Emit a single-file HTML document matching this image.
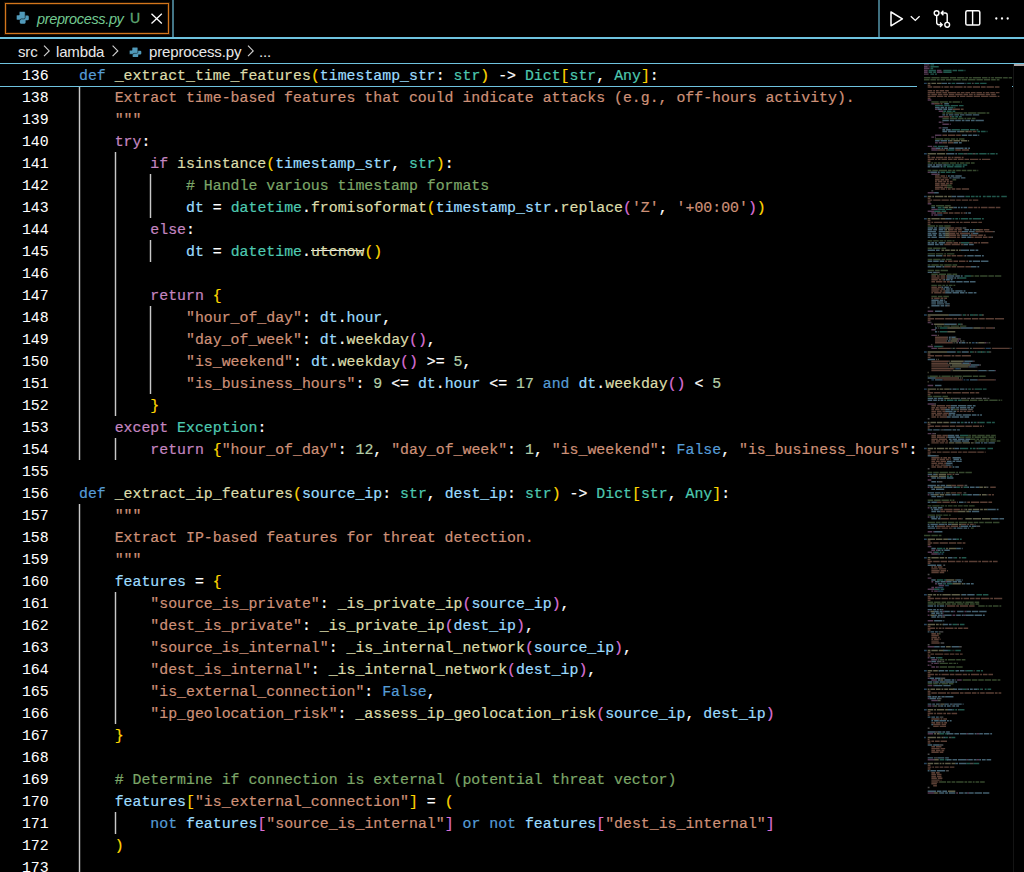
<!DOCTYPE html>
<html><head><meta charset="utf-8"><style>
html,body{margin:0;padding:0;background:#000;width:1024px;height:872px;overflow:hidden;position:relative}
*{box-sizing:border-box}
#code{position:absolute;left:0;top:0;width:918px;height:872px;overflow:hidden}
.ln,.nm{position:absolute;margin-top:1px;height:22px;-webkit-text-stroke:0.2px currentColor;line-height:22px;font-family:"Liberation Mono",monospace;font-size:14.87px;white-space:pre;color:#fff}
.ln{left:79px}
.nm{left:0;width:48.7px;text-align:right}
.gd{position:absolute;width:1px;background:#c8c8c8;box-shadow:-1px 0 0 rgba(200,200,200,.22),1px 0 0 rgba(200,200,200,.22)}
#sticky{position:absolute;left:0;top:64px;width:917px;height:23px;background:#000;border-bottom:1px solid #6fc3df}
i{font-style:normal}
.kw{color:#569cd6}.ct{color:#c586c0}.fn{color:#dcdcaa}.vr{color:#9cdcfe}.ty{color:#4ec9b0}.st{color:#ce9178}.nu{color:#b5cea8}.cm{color:#7ca668}.p{color:#fff}
.b1{color:#ffd700}.b2{color:#da70d6}.b3{color:#179fff}
.dep{color:#dcdcaa;background:linear-gradient(#f0f0f0,#f0f0f0) no-repeat 0 6.2px/100% 1.1px}
.nm{-webkit-text-stroke:0.05px currentColor}

</style></head><body>
<div style="position:absolute;left:0;top:37px;width:1024px;height:2px;background:#6fc3df"></div>
<div style="position:absolute;left:0;top:63px;width:1024px;height:1px;background:#6fc3df"></div>
<div style="position:absolute;left:172px;top:0;width:2px;height:37px;background:#6fc3df;opacity:.6"></div>
<div style="position:absolute;left:878px;top:0;width:2px;height:37px;background:#6fc3df;opacity:.57"></div>
<div style="position:absolute;left:5px;top:3px;width:164px;height:31px;border:1px solid #d2761c;box-shadow:0 0 0 1px rgba(243,133,24,.16),inset 0 0 0 1px rgba(243,133,24,.16)"></div>
<svg style="position:absolute;left:16px;top:11px" width="13" height="13" viewBox="0 0 13 13"><g fill="#519aba"><path d="M5.6 4.6 H11.6 Q12.8 4.6 12.8 5.8 V8.2 Q12.8 9.3 11.6 9.3 H9.6 V11.6 Q9.6 12.7 8.5 12.7 H4.9 Q3.8 12.7 3.8 11.6 V8.4 Q3.8 7.6 4.6 7.6 H5.6 Z"/><path d="M4.3 0.4 H8.1 Q9.2 0.4 9.2 1.5 V6.6 Q9.2 7.9 7.9 7.9 H5.2 Q4.4 7.9 4.4 8.7 V9 H1.5 Q0.4 9 0.4 7.9 V5.1 Q0.4 4 1.5 4 H3.2 V1.5 Q3.2 0.4 4.3 0.4 Z" stroke="#000" stroke-width="0.55"/></g></svg>
<div id="tabt" style="position:absolute;left:37px;top:11px;height:20px;line-height:20px;letter-spacing:-0.35px;font:italic 14.5px 'Liberation Sans',sans-serif;color:#73c991;white-space:pre">preprocess.py</div>
<div id="tabu" style="position:absolute;left:130px;top:10px;height:20px;line-height:20px;font:14px 'Liberation Sans',sans-serif;color:#5fa873;-webkit-text-stroke:0.35px #5fa873">U</div>
<svg style="position:absolute;left:150px;top:12px" width="14" height="14" viewBox="0 0 14 14"><path d="M1.5 1.8 L11.8 11.4 M11.8 1.8 L1.5 11.4" stroke="#fff" stroke-width="1.3" fill="none"/></svg>
<svg style="position:absolute;left:880px;top:0" width="144" height="37" viewBox="880 0 144 37" fill="none" stroke="#fff">
<path d="M891 12 L891 25.8 L902.4 18.9 Z" stroke-width="1.5" stroke-linejoin="round"/>
<path d="M910.8 16.2 L915.3 20.5 L919.6 16.2" stroke-width="1.25"/>
<circle cx="936.6" cy="13.1" r="2.4" stroke-width="1.4"/>
<circle cx="947.2" cy="24.8" r="2.4" stroke-width="1.4"/>
<path d="M936.7 15.6 V22.6 Q936.7 24.7 938.8 24.7 H942.2 M940 22.5 L942.2 24.7 L940 26.9" stroke-width="1.4"/>
<path d="M947.2 22.4 V15 Q947.2 13 945.2 13 H941.2 M943.4 10.8 L941.2 13 L943.4 15.2" stroke-width="1.4"/>
<rect x="965.8" y="10.7" width="14" height="14.4" rx="1.6" stroke-width="1.5"/>
<path d="M972.6 10.7 V25.1" stroke-width="1.4"/>
<g fill="#fff" stroke="none"><circle cx="996.3" cy="18.5" r="1.15"/><circle cx="1002" cy="18.5" r="1.15"/><circle cx="1007.7" cy="18.5" r="1.15"/></g>
</svg>
<div id="bc1" style="position:absolute;letter-spacing:-0.15px;left:18px;top:43px;height:22px;line-height:20px;font:15px 'Liberation Sans',sans-serif;color:#e8e8e8;white-space:pre">src</div>
<div id="bc2" style="position:absolute;letter-spacing:-0.15px;left:56px;top:43px;height:22px;line-height:20px;font:15px 'Liberation Sans',sans-serif;color:#e8e8e8;white-space:pre">lambda</div>
<div id="bc3" style="position:absolute;letter-spacing:-0.15px;left:149px;top:43px;height:22px;line-height:20px;font:15px 'Liberation Sans',sans-serif;color:#e8e8e8;white-space:pre">preprocess.py</div>
<div id="bc4" style="position:absolute;letter-spacing:-0.15px;left:259px;top:43px;height:22px;line-height:20px;font:15px 'Liberation Sans',sans-serif;color:#e8e8e8;white-space:pre">...</div>
<svg style="position:absolute;left:0;top:40px" width="300" height="23" viewBox="0 40 300 23" fill="none" stroke="#d0d0d0" stroke-width="1.15">
<path d="M44 45.6 L49.2 50.9 L44 56.2"/>
<path d="M112.6 45.6 L117.8 50.9 L112.6 56.2"/>
<path d="M248 45.6 L253.2 50.9 L248 56.2"/>
</svg>
<svg style="position:absolute;left:129px;top:46.5px" width="12.5" height="10.5" viewBox="0 0 13 13" preserveAspectRatio="none"><g fill="#519aba"><path d="M5.6 4.6 H11.6 Q12.8 4.6 12.8 5.8 V8.2 Q12.8 9.3 11.6 9.3 H9.6 V11.6 Q9.6 12.7 8.5 12.7 H4.9 Q3.8 12.7 3.8 11.6 V8.4 Q3.8 7.6 4.6 7.6 H5.6 Z"/><path d="M4.3 0.4 H8.1 Q9.2 0.4 9.2 1.5 V6.6 Q9.2 7.9 7.9 7.9 H5.2 Q4.4 7.9 4.4 8.7 V9 H1.5 Q0.4 9 0.4 7.9 V5.1 Q0.4 4 1.5 4 H3.2 V1.5 Q3.2 0.4 4.3 0.4 Z" stroke="#000" stroke-width="0.55"/></g></svg>

<div id="code">
<div class="gd" style="left:79px;top:86px;height:374px"></div><div class="gd" style="left:79px;top:504px;height:374px"></div><div class="gd" style="left:115px;top:152px;height:264px"></div><div class="gd" style="left:115px;top:438px;height:22px"></div><div class="gd" style="left:115px;top:592px;height:132px"></div><div class="gd" style="left:115px;top:812px;height:22px"></div><div class="gd" style="left:150px;top:174px;height:44px"></div><div class="gd" style="left:150px;top:240px;height:22px"></div><div class="gd" style="left:150px;top:306px;height:88px"></div>
<div class="nm" style="top:86px">138</div><div class="nm" style="top:108px">139</div><div class="nm" style="top:130px">140</div><div class="nm" style="top:152px">141</div><div class="nm" style="top:174px">142</div><div class="nm" style="top:196px">143</div><div class="nm" style="top:218px">144</div><div class="nm" style="top:240px">145</div><div class="nm" style="top:262px">146</div><div class="nm" style="top:284px">147</div><div class="nm" style="top:306px">148</div><div class="nm" style="top:328px">149</div><div class="nm" style="top:350px">150</div><div class="nm" style="top:372px">151</div><div class="nm" style="top:394px">152</div><div class="nm" style="top:416px">153</div><div class="nm" style="top:438px">154</div><div class="nm" style="top:460px">155</div><div class="nm" style="top:482px">156</div><div class="nm" style="top:504px">157</div><div class="nm" style="top:526px">158</div><div class="nm" style="top:548px">159</div><div class="nm" style="top:570px">160</div><div class="nm" style="top:592px">161</div><div class="nm" style="top:614px">162</div><div class="nm" style="top:636px">163</div><div class="nm" style="top:658px">164</div><div class="nm" style="top:680px">165</div><div class="nm" style="top:702px">166</div><div class="nm" style="top:724px">167</div><div class="nm" style="top:746px">168</div><div class="nm" style="top:768px">169</div><div class="nm" style="top:790px">170</div><div class="nm" style="top:812px">171</div><div class="nm" style="top:834px">172</div><div class="nm" style="top:856px">173</div>
<div class="ln" style="top:86px"><i class="st">    Extract time-based features that could indicate attacks (e.g., off-hours activity).</i></div><div class="ln" style="top:108px"><i class="st">    """</i></div><div class="ln" style="top:130px">    <i class="ct">try</i><i class="p">:</i></div><div class="ln" style="top:152px">        <i class="ct">if</i> <i class="fn">isinstance</i><i class="b1">(</i><i class="vr">timestamp_str</i><i class="p">, </i><i class="ty">str</i><i class="b1">)</i><i class="p">:</i></div><div class="ln" style="top:174px">            <i class="cm"># Handle various timestamp formats</i></div><div class="ln" style="top:196px">            <i class="vr">dt</i><i class="p"> = </i><i class="ty">datetime</i><i class="p">.</i><i class="fn">fromisoformat</i><i class="b1">(</i><i class="vr">timestamp_str</i><i class="p">.</i><i class="fn">replace</i><i class="b2">(</i><i class="st">'Z'</i><i class="p">, </i><i class="st">'+00:00'</i><i class="b2">)</i><i class="b1">)</i></div><div class="ln" style="top:218px">        <i class="ct">else</i><i class="p">:</i></div><div class="ln" style="top:240px">            <i class="vr">dt</i><i class="p"> = </i><i class="ty">datetime</i><i class="p">.</i><i class="dep">utcnow</i><i class="b1">()</i></div><div class="ln" style="top:262px"></div><div class="ln" style="top:284px">        <i class="ct">return</i> <i class="b1">{</i></div><div class="ln" style="top:306px">            <i class="st">"hour_of_day"</i><i class="p">: </i><i class="vr">dt</i><i class="p">.</i><i class="vr">hour</i><i class="p">,</i></div><div class="ln" style="top:328px">            <i class="st">"day_of_week"</i><i class="p">: </i><i class="vr">dt</i><i class="p">.</i><i class="fn">weekday</i><i class="b2">()</i><i class="p">,</i></div><div class="ln" style="top:350px">            <i class="st">"is_weekend"</i><i class="p">: </i><i class="vr">dt</i><i class="p">.</i><i class="fn">weekday</i><i class="b2">()</i><i class="p"> &gt;= </i><i class="nu">5</i><i class="p">,</i></div><div class="ln" style="top:372px">            <i class="st">"is_business_hours"</i><i class="p">: </i><i class="nu">9</i><i class="p"> &lt;= </i><i class="vr">dt</i><i class="p">.</i><i class="vr">hour</i><i class="p"> &lt;= </i><i class="nu">17</i> <i class="kw">and</i> <i class="vr">dt</i><i class="p">.</i><i class="fn">weekday</i><i class="b2">()</i><i class="p"> &lt; </i><i class="nu">5</i></div><div class="ln" style="top:394px">        <i class="b1">}</i></div><div class="ln" style="top:416px">    <i class="ct">except</i> <i class="ty">Exception</i><i class="p">:</i></div><div class="ln" style="top:438px">        <i class="ct">return</i> <i class="b1">{</i><i class="st">"hour_of_day"</i><i class="p">: </i><i class="nu">12</i><i class="p">, </i><i class="st">"day_of_week"</i><i class="p">: </i><i class="nu">1</i><i class="p">, </i><i class="st">"is_weekend"</i><i class="p">: </i><i class="kw">False</i><i class="p">, </i><i class="st">"is_business_hours"</i><i class="p">: </i><i class="kw">False</i><i class="b1">}</i></div><div class="ln" style="top:460px"></div><div class="ln" style="top:482px"><i class="kw">def</i> <i class="fn">_extract_ip_features</i><i class="b1">(</i><i class="vr">source_ip</i><i class="p">: </i><i class="ty">str</i><i class="p">, </i><i class="vr">dest_ip</i><i class="p">: </i><i class="ty">str</i><i class="b1">)</i><i class="p"> -&gt; </i><i class="ty">Dict</i><i class="b1">[</i><i class="ty">str</i><i class="p">, </i><i class="ty">Any</i><i class="b1">]</i><i class="p">:</i></div><div class="ln" style="top:504px"><i class="st">    """</i></div><div class="ln" style="top:526px"><i class="st">    Extract IP-based features for threat detection.</i></div><div class="ln" style="top:548px"><i class="st">    """</i></div><div class="ln" style="top:570px">    <i class="vr">features</i><i class="p"> = </i><i class="b1">{</i></div><div class="ln" style="top:592px">        <i class="st">"source_is_private"</i><i class="p">: </i><i class="fn">_is_private_ip</i><i class="b2">(</i><i class="vr">source_ip</i><i class="b2">)</i><i class="p">,</i></div><div class="ln" style="top:614px">        <i class="st">"dest_is_private"</i><i class="p">: </i><i class="fn">_is_private_ip</i><i class="b2">(</i><i class="vr">dest_ip</i><i class="b2">)</i><i class="p">,</i></div><div class="ln" style="top:636px">        <i class="st">"source_is_internal"</i><i class="p">: </i><i class="fn">_is_internal_network</i><i class="b2">(</i><i class="vr">source_ip</i><i class="b2">)</i><i class="p">,</i></div><div class="ln" style="top:658px">        <i class="st">"dest_is_internal"</i><i class="p">: </i><i class="fn">_is_internal_network</i><i class="b2">(</i><i class="vr">dest_ip</i><i class="b2">)</i><i class="p">,</i></div><div class="ln" style="top:680px">        <i class="st">"is_external_connection"</i><i class="p">: </i><i class="kw">False</i><i class="p">,</i></div><div class="ln" style="top:702px">        <i class="st">"ip_geolocation_risk"</i><i class="p">: </i><i class="fn">_assess_ip_geolocation_risk</i><i class="b2">(</i><i class="vr">source_ip</i><i class="p">, </i><i class="vr">dest_ip</i><i class="b2">)</i></div><div class="ln" style="top:724px">    <i class="b1">}</i></div><div class="ln" style="top:746px"></div><div class="ln" style="top:768px">    <i class="cm"># Determine if connection is external (potential threat vector)</i></div><div class="ln" style="top:790px">    <i class="vr">features</i><i class="b1">[</i><i class="st">"is_external_connection"</i><i class="b1">]</i><i class="p"> = </i><i class="b1">(</i></div><div class="ln" style="top:812px">        <i class="kw">not</i> <i class="vr">features</i><i class="b2">[</i><i class="st">"source_is_internal"</i><i class="b2">]</i> <i class="kw">or</i> <i class="kw">not</i> <i class="vr">features</i><i class="b2">[</i><i class="st">"dest_is_internal"</i><i class="b2">]</i></div><div class="ln" style="top:834px">    <i class="b1">)</i></div><div class="ln" style="top:856px"></div>
<div id="sticky"><div class="nm" style="top:0px">136</div><div class="ln" style="top:0px"><i class="kw">def</i> <i class="fn">_extract_time_features</i><i class="b1">(</i><i class="vr">timestamp_str</i><i class="p">: </i><i class="ty">str</i><i class="b1">)</i><i class="p"> -&gt; </i><i class="ty">Dict</i><i class="b1">[</i><i class="ty">str</i><i class="p">, </i><i class="ty">Any</i><i class="b1">]</i><i class="p">:</i></div></div>
</div>
<svg style="position:absolute;left:0;top:0" width="1024" height="872" viewBox="0 0 1024 872"><defs><filter id="mmb" x="0" y="0" width="1" height="1"><feGaussianBlur stdDeviation="0.3"/></filter></defs><g opacity="0.43" filter="url(#mmb)"><path fill="#c586c0" d="M924.00 64.13h5.52v1.45h-5.52zM924.00 65.98h3.68v1.45h-3.68zM928.60 65.98h0.92v1.45h-0.92zM924.00 67.84h5.52v1.45h-5.52zM924.00 69.69h3.68v1.45h-3.68zM936.88 69.69h4.60v1.45h-4.60zM924.00 71.54h3.68v1.45h-3.68zM936.88 71.54h5.52v1.45h-5.52zM924.00 73.39h4.60v1.45h-4.60zM927.68 99.34h3.68v1.45h-3.68zM931.36 103.04h2.76v1.45h-2.76zM935.04 108.60h2.76v1.45h-2.76zM938.72 110.45h4.60v1.45h-4.60zM938.72 116.01h4.60v1.45h-4.60zM938.72 121.57h2.76v1.45h-2.76zM942.40 121.57h0.92v1.45h-0.92zM942.40 123.43h6.44v1.45h-6.44zM949.76 123.43h0.92v1.45h-0.92zM938.72 127.13h2.76v1.45h-2.76zM935.04 134.54h6.44v1.45h-6.44zM931.36 136.40h2.76v1.45h-2.76zM935.04 136.40h0.92v1.45h-0.92zM935.04 141.96h2.76v1.45h-2.76zM938.72 141.96h3.68v1.45h-3.68zM927.68 145.66h4.60v1.45h-4.60zM933.20 145.66h0.92v1.45h-0.92zM931.36 147.51h4.60v1.45h-4.60zM931.36 149.37h6.44v1.45h-6.44zM927.68 171.60h2.76v1.45h-2.76zM931.36 173.46h6.44v1.45h-6.44zM927.68 191.99h6.44v1.45h-6.44zM927.68 203.10h3.68v1.45h-3.68zM931.36 208.66h6.44v1.45h-6.44zM927.68 210.52h6.44v1.45h-6.44zM931.36 212.37h4.60v1.45h-4.60zM936.88 212.37h0.92v1.45h-0.92zM931.36 214.22h1.84v1.45h-1.84zM934.12 214.22h3.68v1.45h-3.68zM927.68 310.58h5.52v1.45h-5.52zM927.68 321.70h2.76v1.45h-2.76zM931.36 323.55h1.84v1.45h-1.84zM980.12 327.26h0.92v1.45h-0.92zM993.00 327.26h0.92v1.45h-0.92zM931.36 329.11h3.68v1.45h-3.68zM931.36 334.67h5.52v1.45h-5.52zM958.04 338.37h1.84v1.45h-1.84zM957.12 340.23h1.84v1.45h-1.84zM984.72 342.08h1.84v1.45h-1.84zM927.68 345.79h5.52v1.45h-5.52zM931.36 347.64h5.52v1.45h-5.52zM963.56 360.61h0.92v1.45h-0.92zM972.76 360.61h0.92v1.45h-0.92zM961.72 362.46h0.92v1.45h-0.92zM969.08 362.46h0.92v1.45h-0.92zM970.00 364.32h0.92v1.45h-0.92zM979.20 364.32h0.92v1.45h-0.92zM968.16 366.17h0.92v1.45h-0.92zM975.52 366.17h0.92v1.45h-0.92zM977.36 369.88h0.92v1.45h-0.92zM994.84 369.88h0.92v1.45h-0.92zM942.40 379.14h0.92v1.45h-0.92zM961.72 379.14h0.92v1.45h-0.92zM977.36 379.14h0.92v1.45h-0.92zM994.84 379.14h0.92v1.45h-0.92zM927.68 384.70h5.52v1.45h-5.52zM927.68 403.23h6.44v1.45h-6.44zM927.68 432.88h3.68v1.45h-3.68zM932.28 432.88h1.84v1.45h-1.84zM927.68 475.50h1.84v1.45h-1.84zM927.68 479.20h3.68v1.45h-3.68zM927.68 486.61h1.84v1.45h-1.84zM927.68 494.03h1.84v1.45h-1.84zM927.68 507.00h1.84v1.45h-1.84zM927.68 516.26h1.84v1.45h-1.84zM927.68 531.09h4.60v1.45h-4.60zM933.20 531.09h0.92v1.45h-0.92zM927.68 545.91h3.68v1.45h-3.68zM931.36 549.62h3.68v1.45h-3.68zM935.96 549.62h1.84v1.45h-1.84zM927.68 551.47h4.60v1.45h-4.60zM933.20 551.47h0.92v1.45h-0.92zM931.36 553.32h6.44v1.45h-6.44zM927.68 577.41h3.68v1.45h-3.68zM931.36 581.12h1.84v1.45h-1.84zM945.16 581.12h1.84v1.45h-1.84zM935.04 582.97h1.84v1.45h-1.84zM938.72 584.82h5.52v1.45h-5.52zM931.36 586.68h2.76v1.45h-2.76zM935.04 586.68h2.76v1.45h-2.76zM927.68 588.53h6.44v1.45h-6.44zM931.36 590.38h1.84v1.45h-1.84zM934.12 590.38h3.68v1.45h-3.68zM927.68 610.76h1.84v1.45h-1.84zM942.40 610.76h1.84v1.45h-1.84zM953.44 610.76h1.84v1.45h-1.84zM964.48 610.76h1.84v1.45h-1.84zM927.68 614.47h1.84v1.45h-1.84zM942.40 614.47h1.84v1.45h-1.84zM952.52 614.47h2.76v1.45h-2.76zM963.56 614.47h1.84v1.45h-1.84zM927.68 620.03h5.52v1.45h-5.52zM927.68 645.97h6.44v1.45h-6.44zM927.68 657.09h1.84v1.45h-1.84zM931.36 658.94h5.52v1.45h-5.52zM927.68 660.80h3.68v1.45h-3.68zM931.36 662.65h1.84v1.45h-1.84zM934.12 662.65h3.68v1.45h-3.68zM927.68 664.50h1.84v1.45h-1.84zM930.44 664.50h0.92v1.45h-0.92zM931.36 666.36h3.68v1.45h-3.68zM935.96 666.36h1.84v1.45h-1.84zM927.68 677.47h1.84v1.45h-1.84zM931.36 679.33h5.52v1.45h-5.52zM957.12 679.33h4.60v1.45h-4.60zM927.68 684.88h4.60v1.45h-4.60zM933.20 684.88h0.92v1.45h-0.92zM927.68 697.86h1.84v1.45h-1.84zM931.36 699.71h6.44v1.45h-6.44zM927.68 705.27h3.68v1.45h-3.68zM932.28 705.27h1.84v1.45h-1.84zM927.68 733.06h5.52v1.45h-5.52zM966.32 733.06h1.84v1.45h-1.84zM976.44 733.06h2.76v1.45h-2.76zM927.68 759.00h6.44v1.45h-6.44zM966.32 759.00h1.84v1.45h-1.84zM976.44 759.00h2.76v1.45h-2.76zM927.68 792.36h6.44v1.45h-6.44zM956.20 792.36h1.84v1.45h-1.84zM967.24 792.36h1.84v1.45h-1.84z"/><path fill="#4ec9b0" d="M930.44 64.13h3.68v1.45h-3.68zM930.44 65.98h8.28v1.45h-8.28zM930.44 67.84h2.76v1.45h-2.76zM928.60 69.69h7.36v1.45h-7.36zM943.32 69.69h8.28v1.45h-8.28zM952.52 69.69h4.60v1.45h-4.60zM958.04 69.69h5.52v1.45h-5.52zM964.48 69.69h0.92v1.45h-0.92zM928.60 71.54h3.68v1.45h-3.68zM933.20 71.54h2.76v1.45h-2.76zM943.32 71.54h8.28v1.45h-8.28zM930.44 73.39h3.68v1.45h-3.68zM935.04 73.39h1.84v1.45h-1.84zM951.60 82.66h3.68v1.45h-3.68zM967.24 82.66h3.68v1.45h-3.68zM974.60 82.66h4.60v1.45h-4.60zM980.12 82.66h6.44v1.45h-6.44zM935.04 104.90h8.28v1.45h-8.28zM944.24 104.90h5.52v1.45h-5.52zM950.68 104.90h7.36v1.45h-7.36zM958.96 104.90h4.60v1.45h-4.60zM948.84 106.75h4.60v1.45h-4.60zM954.36 106.75h0.92v1.45h-0.92zM943.32 110.45h2.76v1.45h-2.76zM947.00 110.45h4.60v1.45h-4.60zM952.52 110.45h2.76v1.45h-2.76zM951.60 116.01h2.76v1.45h-2.76zM955.28 116.01h2.76v1.45h-2.76zM958.96 116.01h2.76v1.45h-2.76zM951.60 128.99h8.28v1.45h-8.28zM960.80 128.99h8.28v1.45h-8.28zM970.00 128.99h5.52v1.45h-5.52zM976.44 128.99h1.84v1.45h-1.84zM977.36 130.84h2.76v1.45h-2.76zM981.04 130.84h4.60v1.45h-4.60zM986.56 130.84h0.92v1.45h-0.92zM934.12 145.66h2.76v1.45h-2.76zM937.80 145.66h6.44v1.45h-6.44zM947.92 149.37h6.44v1.45h-6.44zM958.04 153.07h5.52v1.45h-5.52zM967.24 153.07h5.52v1.45h-5.52zM975.52 153.07h2.76v1.45h-2.76zM979.20 153.07h7.36v1.45h-7.36zM987.48 153.07h1.84v1.45h-1.84zM990.24 153.07h4.60v1.45h-4.60zM995.76 153.07h1.84v1.45h-1.84zM946.08 164.19h4.60v1.45h-4.60zM951.60 164.19h2.76v1.45h-2.76zM955.28 164.19h6.44v1.45h-6.44zM962.64 164.19h4.60v1.45h-4.60zM943.32 166.04h2.76v1.45h-2.76zM947.00 166.04h6.44v1.45h-6.44zM954.36 166.04h7.36v1.45h-7.36zM962.64 166.04h1.84v1.45h-1.84zM940.56 171.60h4.60v1.45h-4.60zM946.08 171.60h4.60v1.45h-4.60zM951.60 171.60h3.68v1.45h-3.68zM965.40 195.69h4.60v1.45h-4.60zM970.92 195.69h3.68v1.45h-3.68zM975.52 195.69h2.76v1.45h-2.76zM979.20 195.69h1.84v1.45h-1.84zM982.88 195.69h2.76v1.45h-2.76zM986.56 195.69h4.60v1.45h-4.60zM992.08 195.69h3.68v1.45h-3.68zM996.68 195.69h2.76v1.45h-2.76zM1001.28 195.69h5.52v1.45h-5.52zM937.80 206.81h3.68v1.45h-3.68zM942.40 206.81h1.84v1.45h-1.84zM937.80 208.66h7.36v1.45h-7.36zM946.08 208.66h5.52v1.45h-5.52zM934.12 210.52h6.44v1.45h-6.44zM941.48 210.52h4.60v1.45h-4.60zM952.52 217.93h1.84v1.45h-1.84zM955.28 217.93h2.76v1.45h-2.76zM958.96 217.93h0.92v1.45h-0.92zM960.80 217.93h7.36v1.45h-7.36zM969.08 217.93h2.76v1.45h-2.76zM972.76 217.93h8.28v1.45h-8.28zM981.96 217.93h1.84v1.45h-1.84zM960.80 242.02h8.28v1.45h-8.28zM964.48 275.37h6.44v1.45h-6.44zM958.96 277.23h7.36v1.45h-7.36zM962.64 314.28h2.76v1.45h-2.76zM970.00 314.28h3.68v1.45h-3.68zM974.60 314.28h2.76v1.45h-2.76zM979.20 314.28h2.76v1.45h-2.76zM958.04 323.55h2.76v1.45h-2.76zM939.64 327.26h7.36v1.45h-7.36zM939.64 330.96h7.36v1.45h-7.36zM934.12 345.79h8.28v1.45h-8.28zM957.12 351.34h2.76v1.45h-2.76zM970.00 351.34h2.76v1.45h-2.76zM977.36 351.34h3.68v1.45h-3.68zM981.96 351.34h2.76v1.45h-2.76zM986.56 351.34h2.76v1.45h-2.76zM956.20 388.40h2.76v1.45h-2.76zM968.16 388.40h2.76v1.45h-2.76zM974.60 388.40h7.36v1.45h-7.36zM982.88 388.40h3.68v1.45h-3.68zM944.24 399.52h1.84v1.45h-1.84zM947.00 399.52h6.44v1.45h-6.44zM954.36 399.52h2.76v1.45h-2.76zM958.04 399.52h3.68v1.45h-3.68zM960.80 421.76h2.76v1.45h-2.76zM973.68 421.76h2.76v1.45h-2.76zM979.20 421.76h5.52v1.45h-5.52zM986.56 421.76h4.60v1.45h-4.60zM992.08 421.76h2.76v1.45h-2.76zM959.88 434.73h8.28v1.45h-8.28zM960.80 447.70h7.36v1.45h-7.36zM970.00 447.70h1.84v1.45h-1.84zM972.76 447.70h2.76v1.45h-2.76zM978.28 447.70h7.36v1.45h-7.36zM987.48 447.70h5.52v1.45h-5.52zM947.00 475.50h1.84v1.45h-1.84zM949.76 475.50h2.76v1.45h-2.76zM956.20 486.61h3.68v1.45h-3.68zM963.56 486.61h3.68v1.45h-3.68zM956.20 494.03h3.68v1.45h-3.68zM962.64 494.03h4.60v1.45h-4.60zM956.20 538.50h2.76v1.45h-2.76zM959.88 538.50h1.84v1.45h-1.84zM936.88 547.76h5.52v1.45h-5.52zM943.32 547.76h1.84v1.45h-1.84zM934.12 551.47h4.60v1.45h-4.60zM939.64 551.47h1.84v1.45h-1.84zM942.40 551.47h1.84v1.45h-1.84zM954.36 557.03h2.76v1.45h-2.76zM961.72 557.03h4.60v1.45h-4.60zM936.88 579.26h6.44v1.45h-6.44zM944.24 579.26h1.84v1.45h-1.84zM944.24 582.97h1.84v1.45h-1.84zM947.00 582.97h5.52v1.45h-5.52zM934.12 588.53h5.52v1.45h-5.52zM940.56 588.53h3.68v1.45h-3.68zM976.44 594.09h5.52v1.45h-5.52zM982.88 594.09h5.52v1.45h-5.52zM952.52 623.74h4.60v1.45h-4.60zM959.88 623.74h4.60v1.45h-4.60zM947.92 649.68h2.76v1.45h-2.76zM951.60 649.68h0.92v1.45h-0.92zM955.28 649.68h5.52v1.45h-5.52zM937.80 657.09h4.60v1.45h-4.60zM948.84 670.06h5.52v1.45h-5.52zM955.28 670.06h1.84v1.45h-1.84zM966.32 670.06h6.44v1.45h-6.44zM976.44 670.06h3.68v1.45h-3.68zM981.04 670.06h1.84v1.45h-1.84zM962.64 688.59h3.68v1.45h-3.68zM977.36 688.59h1.84v1.45h-1.84zM980.12 688.59h1.84v1.45h-1.84zM984.72 688.59h1.84v1.45h-1.84zM987.48 688.59h3.68v1.45h-3.68zM952.52 708.97h1.84v1.45h-1.84zM955.28 708.97h1.84v1.45h-1.84zM958.96 708.97h5.52v1.45h-5.52zM939.64 733.06h4.60v1.45h-4.60zM945.16 733.06h2.76v1.45h-2.76zM945.16 736.77h2.76v1.45h-2.76zM951.60 736.77h3.68v1.45h-3.68zM939.64 759.00h4.60v1.45h-4.60zM945.16 759.00h2.76v1.45h-2.76zM966.32 762.71h3.68v1.45h-3.68zM973.68 762.71h5.52v1.45h-5.52z"/><path fill="#7ca668" d="M924.00 77.10h6.44v1.45h-6.44zM931.36 77.10h8.28v1.45h-8.28zM940.56 77.10h8.28v1.45h-8.28zM949.76 77.10h6.44v1.45h-6.44zM957.12 77.10h7.36v1.45h-7.36zM965.40 77.10h2.76v1.45h-2.76zM969.08 77.10h2.76v1.45h-2.76zM972.76 77.10h8.28v1.45h-8.28zM981.96 77.10h5.52v1.45h-5.52zM988.40 77.10h1.84v1.45h-1.84zM991.16 77.10h2.76v1.45h-2.76zM994.84 77.10h7.36v1.45h-7.36zM1003.12 77.10h4.60v1.45h-4.60zM1008.64 77.10h3.36v1.45h-3.36zM924.00 78.95h5.52v1.45h-5.52zM930.44 78.95h5.52v1.45h-5.52zM936.88 78.95h2.76v1.45h-2.76zM940.56 78.95h4.60v1.45h-4.60zM946.08 78.95h5.52v1.45h-5.52zM952.52 78.95h8.28v1.45h-8.28zM961.72 78.95h5.52v1.45h-5.52zM968.16 78.95h7.36v1.45h-7.36zM976.44 78.95h6.44v1.45h-6.44zM983.80 78.95h6.44v1.45h-6.44zM991.16 78.95h4.60v1.45h-4.60zM996.68 78.95h2.76v1.45h-2.76zM931.36 101.19h7.36v1.45h-7.36zM939.64 101.19h8.28v1.45h-8.28zM948.84 101.19h2.76v1.45h-2.76zM952.52 101.19h7.36v1.45h-7.36zM960.80 101.19h0.92v1.45h-0.92zM942.40 112.31h2.76v1.45h-2.76zM946.08 112.31h7.36v1.45h-7.36zM954.36 112.31h8.28v1.45h-8.28zM963.56 112.31h3.68v1.45h-3.68zM968.16 112.31h8.28v1.45h-8.28zM977.36 112.31h8.28v1.45h-8.28zM986.56 112.31h2.76v1.45h-2.76zM942.40 117.87h6.44v1.45h-6.44zM949.76 117.87h7.36v1.45h-7.36zM958.04 117.87h5.52v1.45h-5.52zM964.48 117.87h1.84v1.45h-1.84zM967.24 117.87h3.68v1.45h-3.68zM971.84 117.87h3.68v1.45h-3.68zM935.04 138.25h8.28v1.45h-8.28zM944.24 138.25h5.52v1.45h-5.52zM950.68 138.25h4.60v1.45h-4.60zM956.20 138.25h1.84v1.45h-1.84zM958.96 138.25h5.52v1.45h-5.52zM927.68 162.34h2.76v1.45h-2.76zM931.36 162.34h1.84v1.45h-1.84zM934.12 162.34h2.76v1.45h-2.76zM937.80 162.34h2.76v1.45h-2.76zM941.48 162.34h7.36v1.45h-7.36zM949.76 162.34h6.44v1.45h-6.44zM957.12 162.34h1.84v1.45h-1.84zM959.88 162.34h4.60v1.45h-4.60zM965.40 162.34h4.60v1.45h-4.60zM970.92 162.34h3.68v1.45h-3.68zM927.68 169.75h3.68v1.45h-3.68zM932.28 169.75h5.52v1.45h-5.52zM938.72 169.75h8.28v1.45h-8.28zM947.92 169.75h3.68v1.45h-3.68zM952.52 169.75h2.76v1.45h-2.76zM956.20 169.75h4.60v1.45h-4.60zM961.72 169.75h4.60v1.45h-4.60zM967.24 169.75h4.60v1.45h-4.60zM972.76 169.75h3.68v1.45h-3.68zM977.36 169.75h0.92v1.45h-0.92zM952.52 179.02h3.68v1.45h-3.68zM947.00 184.57h4.60v1.45h-4.60zM947.00 186.43h5.52v1.45h-5.52zM931.36 204.96h3.68v1.45h-3.68zM935.96 204.96h8.28v1.45h-8.28zM945.16 204.96h5.52v1.45h-5.52zM927.68 225.34h7.36v1.45h-7.36zM935.96 225.34h1.84v1.45h-1.84zM938.72 225.34h4.60v1.45h-4.60zM944.24 225.34h6.44v1.45h-6.44zM927.68 240.16h4.60v1.45h-4.60zM933.20 240.16h5.52v1.45h-5.52zM939.64 240.16h3.68v1.45h-3.68zM944.24 240.16h1.84v1.45h-1.84zM947.00 240.16h4.60v1.45h-4.60zM952.52 240.16h1.84v1.45h-1.84zM927.68 247.58h4.60v1.45h-4.60zM933.20 247.58h7.36v1.45h-7.36zM941.48 247.58h4.60v1.45h-4.60zM927.68 253.14h7.36v1.45h-7.36zM935.96 253.14h7.36v1.45h-7.36zM944.24 253.14h1.84v1.45h-1.84zM947.00 253.14h7.36v1.45h-7.36zM927.68 258.69h4.60v1.45h-4.60zM933.20 258.69h7.36v1.45h-7.36zM941.48 258.69h3.68v1.45h-3.68zM946.08 258.69h5.52v1.45h-5.52zM927.68 264.25h2.76v1.45h-2.76zM931.36 264.25h7.36v1.45h-7.36zM939.64 264.25h3.68v1.45h-3.68zM944.24 264.25h7.36v1.45h-7.36zM952.52 264.25h4.60v1.45h-4.60zM927.68 269.81h6.44v1.45h-6.44zM935.04 269.81h4.60v1.45h-4.60zM940.56 269.81h7.36v1.45h-7.36zM931.36 273.52h6.44v1.45h-6.44zM938.72 273.52h7.36v1.45h-7.36zM947.00 273.52h4.60v1.45h-4.60zM952.52 273.52h4.60v1.45h-4.60zM970.92 275.37h2.76v1.45h-2.76zM974.60 275.37h4.60v1.45h-4.60zM980.12 275.37h7.36v1.45h-7.36zM988.40 275.37h5.52v1.45h-5.52zM994.84 275.37h6.44v1.45h-6.44zM931.36 284.64h5.52v1.45h-5.52zM937.80 284.64h3.68v1.45h-3.68zM942.40 284.64h2.76v1.45h-2.76zM946.08 284.64h1.84v1.45h-1.84zM948.84 284.64h3.68v1.45h-3.68zM953.44 284.64h1.84v1.45h-1.84zM931.36 295.75h5.52v1.45h-5.52zM937.80 295.75h4.60v1.45h-4.60zM943.32 295.75h5.52v1.45h-5.52zM935.04 325.40h0.92v1.45h-0.92zM936.88 325.40h5.52v1.45h-5.52zM943.32 325.40h6.44v1.45h-6.44zM950.68 325.40h8.28v1.45h-8.28zM959.88 325.40h6.44v1.45h-6.44zM927.68 375.43h0.92v1.45h-0.92zM929.52 375.43h8.28v1.45h-8.28zM938.72 375.43h1.84v1.45h-1.84zM941.48 375.43h9.20v1.45h-9.20zM951.60 375.43h1.84v1.45h-1.84zM954.36 375.43h7.36v1.45h-7.36zM962.64 375.43h9.20v1.45h-9.20zM972.76 375.43h5.52v1.45h-5.52zM979.20 375.43h6.44v1.45h-6.44zM927.68 395.82h4.60v1.45h-4.60zM933.20 395.82h8.28v1.45h-8.28zM942.40 395.82h5.52v1.45h-5.52zM961.72 399.52h7.36v1.45h-7.36zM970.00 399.52h7.36v1.45h-7.36zM978.28 399.52h4.60v1.45h-4.60zM983.80 399.52h4.60v1.45h-4.60zM989.32 399.52h8.28v1.45h-8.28zM998.52 399.52h1.84v1.45h-1.84zM1001.28 399.52h0.92v1.45h-0.92zM953.44 408.79h3.68v1.45h-3.68zM968.16 434.73h2.76v1.45h-2.76zM971.84 434.73h4.60v1.45h-4.60zM977.36 434.73h7.36v1.45h-7.36zM985.64 434.73h4.60v1.45h-4.60zM991.16 434.73h4.60v1.45h-4.60zM959.88 436.58h4.60v1.45h-4.60zM965.40 436.58h5.52v1.45h-5.52zM971.84 436.58h1.84v1.45h-1.84zM974.60 436.58h6.44v1.45h-6.44zM981.96 436.58h5.52v1.45h-5.52zM988.40 436.58h5.52v1.45h-5.52zM994.84 436.58h0.92v1.45h-0.92zM970.00 438.44h5.52v1.45h-5.52zM976.44 438.44h2.76v1.45h-2.76zM980.12 438.44h4.60v1.45h-4.60zM985.64 438.44h3.68v1.45h-3.68zM990.24 438.44h5.52v1.45h-5.52zM974.60 440.29h2.76v1.45h-2.76zM978.28 440.29h6.44v1.45h-6.44zM985.64 440.29h3.68v1.45h-3.68zM990.24 440.29h5.52v1.45h-5.52zM996.68 440.29h3.68v1.45h-3.68zM927.68 471.79h4.60v1.45h-4.60zM933.20 471.79h5.52v1.45h-5.52zM939.64 471.79h8.28v1.45h-8.28zM948.84 471.79h6.44v1.45h-6.44zM956.20 471.79h1.84v1.45h-1.84zM958.96 471.79h5.52v1.45h-5.52zM965.40 471.79h6.44v1.45h-6.44zM927.68 499.58h5.52v1.45h-5.52zM934.12 499.58h6.44v1.45h-6.44zM941.48 499.58h7.36v1.45h-7.36zM949.76 499.58h1.84v1.45h-1.84zM952.52 499.58h1.84v1.45h-1.84zM927.68 505.14h3.68v1.45h-3.68zM932.28 505.14h7.36v1.45h-7.36zM940.56 505.14h3.68v1.45h-3.68zM945.16 505.14h1.84v1.45h-1.84zM947.92 505.14h4.60v1.45h-4.60zM953.44 505.14h3.68v1.45h-3.68zM958.04 505.14h4.60v1.45h-4.60zM963.56 505.14h4.60v1.45h-4.60zM969.08 505.14h5.52v1.45h-5.52zM927.68 514.41h7.36v1.45h-7.36zM935.96 514.41h6.44v1.45h-6.44zM943.32 514.41h4.60v1.45h-4.60zM948.84 514.41h1.84v1.45h-1.84zM927.68 521.82h7.36v1.45h-7.36zM935.96 521.82h4.60v1.45h-4.60zM941.48 521.82h5.52v1.45h-5.52zM947.92 521.82h6.44v1.45h-6.44zM955.28 521.82h2.76v1.45h-2.76zM958.96 521.82h8.28v1.45h-8.28zM968.16 521.82h4.60v1.45h-4.60zM973.68 521.82h4.60v1.45h-4.60zM979.20 521.82h4.60v1.45h-4.60zM984.72 521.82h7.36v1.45h-7.36zM993.00 521.82h6.44v1.45h-6.44zM970.92 527.38h2.76v1.45h-2.76zM924.00 534.79h6.44v1.45h-6.44zM931.36 534.79h6.44v1.45h-6.44zM938.72 534.79h2.76v1.45h-2.76zM927.68 601.50h5.52v1.45h-5.52zM934.12 601.50h6.44v1.45h-6.44zM941.48 601.50h4.60v1.45h-4.60zM947.00 601.50h7.36v1.45h-7.36zM955.28 601.50h6.44v1.45h-6.44zM962.64 601.50h1.84v1.45h-1.84zM965.40 601.50h8.28v1.45h-8.28zM974.60 601.50h4.60v1.45h-4.60zM927.68 603.35h8.28v1.45h-8.28zM936.88 603.35h7.36v1.45h-7.36zM945.16 603.35h5.52v1.45h-5.52zM951.60 603.35h4.60v1.45h-4.60zM957.12 603.35h6.44v1.45h-6.44zM964.48 603.35h4.60v1.45h-4.60zM970.00 603.35h4.60v1.45h-4.60zM975.52 603.35h3.68v1.45h-3.68zM978.28 605.21h6.44v1.45h-6.44zM985.64 605.21h1.84v1.45h-1.84zM988.40 605.21h3.68v1.45h-3.68zM993.00 605.21h5.52v1.45h-5.52zM999.44 605.21h1.84v1.45h-1.84zM938.72 633.00h1.84v1.45h-1.84zM939.64 658.94h4.60v1.45h-4.60zM945.16 658.94h1.84v1.45h-1.84zM947.92 658.94h7.36v1.45h-7.36zM956.20 658.94h4.60v1.45h-4.60zM961.72 658.94h3.68v1.45h-3.68zM939.64 662.65h8.28v1.45h-8.28zM948.84 662.65h3.68v1.45h-3.68zM953.44 662.65h2.76v1.45h-2.76zM957.12 662.65h0.92v1.45h-0.92zM939.64 666.36h7.36v1.45h-7.36zM947.92 666.36h7.36v1.45h-7.36zM956.20 666.36h6.44v1.45h-6.44zM962.64 679.33h8.28v1.45h-8.28zM971.84 679.33h5.52v1.45h-5.52zM978.28 679.33h5.52v1.45h-5.52zM984.72 679.33h6.44v1.45h-6.44zM992.08 679.33h4.60v1.45h-4.60zM997.60 679.33h2.76v1.45h-2.76zM927.68 683.03h4.60v1.45h-4.60zM933.20 683.03h4.60v1.45h-4.60zM938.72 683.03h1.84v1.45h-1.84zM941.48 683.03h6.44v1.45h-6.44zM948.84 683.03h4.60v1.45h-4.60zM939.64 781.24h6.44v1.45h-6.44zM947.00 781.24h3.68v1.45h-3.68zM951.60 781.24h3.68v1.45h-3.68zM956.20 781.24h7.36v1.45h-7.36zM964.48 781.24h2.76v1.45h-2.76zM968.16 781.24h3.68v1.45h-3.68zM972.76 781.24h1.84v1.45h-1.84zM975.52 781.24h3.68v1.45h-3.68zM980.12 781.24h4.60v1.45h-4.60z"/><path fill="#569cd6" d="M924.00 82.66h2.76v1.45h-2.76zM924.00 153.07h2.76v1.45h-2.76zM924.00 195.69h2.76v1.45h-2.76zM937.80 214.22h4.60v1.45h-4.60zM924.00 217.93h2.76v1.45h-2.76zM924.00 314.28h2.76v1.45h-2.76zM971.84 342.08h2.76v1.45h-2.76zM985.64 347.64h4.60v1.45h-4.60zM1011.40 347.64h0.60v1.45h-0.60zM924.00 351.34h2.76v1.45h-2.76zM955.28 368.02h4.60v1.45h-4.60zM931.36 379.14h2.76v1.45h-2.76zM963.56 379.14h1.84v1.45h-1.84zM966.32 379.14h2.76v1.45h-2.76zM924.00 388.40h2.76v1.45h-2.76zM924.00 421.76h2.76v1.45h-2.76zM924.00 447.70h2.76v1.45h-2.76zM924.00 538.50h2.76v1.45h-2.76zM937.80 553.32h2.76v1.45h-2.76zM941.48 553.32h1.84v1.45h-1.84zM924.00 557.03h2.76v1.45h-2.76zM945.16 584.82h3.68v1.45h-3.68zM937.80 586.68h5.52v1.45h-5.52zM937.80 590.38h5.52v1.45h-5.52zM924.00 594.09h2.76v1.45h-2.76zM924.00 623.74h2.76v1.45h-2.76zM924.00 649.68h2.76v1.45h-2.76zM924.00 670.06h2.76v1.45h-2.76zM924.00 688.59h2.76v1.45h-2.76zM924.00 708.97h2.76v1.45h-2.76zM924.00 736.77h1.84v1.45h-1.84zM924.00 762.71h2.76v1.45h-2.76z"/><path fill="#dcdcaa" d="M927.68 82.66h2.76v1.45h-2.76zM931.36 82.66h4.60v1.45h-4.60zM936.88 82.66h4.60v1.45h-4.60zM959.88 130.84h4.60v1.45h-4.60zM965.40 130.84h2.76v1.45h-2.76zM949.76 140.10h2.76v1.45h-2.76zM953.44 140.10h6.44v1.45h-6.44zM960.80 140.10h6.44v1.45h-6.44zM968.16 140.10h0.92v1.45h-0.92zM927.68 153.07h8.28v1.45h-8.28zM936.88 153.07h8.28v1.45h-8.28zM946.08 153.07h0.92v1.45h-0.92zM927.68 195.69h3.68v1.45h-3.68zM932.28 195.69h1.84v1.45h-1.84zM935.04 195.69h8.28v1.45h-8.28zM944.24 195.69h2.76v1.45h-2.76zM947.92 195.69h3.68v1.45h-3.68zM944.24 206.81h3.68v1.45h-3.68zM948.84 206.81h4.60v1.45h-4.60zM927.68 217.93h2.76v1.45h-2.76zM931.36 217.93h8.28v1.45h-8.28zM940.56 217.93h4.60v1.45h-4.60zM945.16 227.19h4.60v1.45h-4.60zM945.16 229.05h1.84v1.45h-1.84zM947.92 229.05h1.84v1.45h-1.84zM975.52 229.05h4.60v1.45h-4.60zM945.16 230.90h4.60v1.45h-4.60zM945.16 232.75h4.60v1.45h-4.60zM945.16 234.61h4.60v1.45h-4.60zM945.16 236.46h4.60v1.45h-4.60zM941.48 249.43h2.76v1.45h-2.76zM945.16 249.43h4.60v1.45h-4.60zM950.68 249.43h4.60v1.45h-4.60zM956.20 249.43h1.84v1.45h-1.84zM958.96 249.43h1.84v1.45h-1.84zM927.68 314.28h20.24v1.45h-20.24zM947.92 314.28h0.92v1.45h-0.92zM965.40 314.28h0.92v1.45h-0.92zM973.68 314.28h0.92v1.45h-0.92zM981.96 314.28h0.92v1.45h-0.92zM934.12 323.55h9.20v1.45h-9.20zM943.32 323.55h0.92v1.45h-0.92zM960.80 323.55h0.92v1.45h-0.92zM947.92 327.26h11.96v1.45h-11.96zM959.88 327.26h0.92v1.45h-0.92zM973.68 327.26h6.44v1.45h-6.44zM993.92 327.26h0.92v1.45h-0.92zM947.92 330.96h5.52v1.45h-5.52zM953.44 330.96h1.84v1.45h-1.84zM937.80 334.67h0.92v1.45h-0.92zM951.60 338.37h6.44v1.45h-6.44zM950.68 340.23h6.44v1.45h-6.44zM978.28 342.08h6.44v1.45h-6.44zM931.36 343.93h0.92v1.45h-0.92zM937.80 347.64h0.92v1.45h-0.92zM927.68 351.34h18.40v1.45h-18.40zM946.08 351.34h0.92v1.45h-0.92zM972.76 351.34h0.92v1.45h-0.92zM981.04 351.34h0.92v1.45h-0.92zM989.32 351.34h0.92v1.45h-0.92zM937.80 358.76h0.92v1.45h-0.92zM950.68 360.61h12.88v1.45h-12.88zM948.84 362.46h12.88v1.45h-12.88zM951.60 364.32h18.40v1.45h-18.40zM949.76 366.17h18.40v1.45h-18.40zM952.52 369.88h24.84v1.45h-24.84zM927.68 371.73h0.92v1.45h-0.92zM935.04 377.29h0.92v1.45h-0.92zM958.04 377.29h0.92v1.45h-0.92zM961.72 377.29h0.92v1.45h-0.92zM927.68 380.99h0.92v1.45h-0.92zM927.68 388.40h8.28v1.45h-8.28zM936.88 388.40h1.84v1.45h-1.84zM939.64 388.40h3.68v1.45h-3.68zM944.24 388.40h5.52v1.45h-5.52zM944.24 397.67h5.52v1.45h-5.52zM950.68 397.67h1.84v1.45h-1.84zM927.68 421.76h1.84v1.45h-1.84zM930.44 421.76h5.52v1.45h-5.52zM936.88 421.76h5.52v1.45h-5.52zM943.32 421.76h5.52v1.45h-5.52zM949.76 421.76h0.92v1.45h-0.92zM948.84 442.14h5.52v1.45h-5.52zM955.28 442.14h6.44v1.45h-6.44zM962.64 442.14h7.36v1.45h-7.36zM970.92 442.14h2.76v1.45h-2.76zM974.60 442.14h0.92v1.45h-0.92zM927.68 447.70h5.52v1.45h-5.52zM934.12 447.70h1.84v1.45h-1.84zM936.88 447.70h7.36v1.45h-7.36zM945.16 447.70h2.76v1.45h-2.76zM948.84 447.70h2.76v1.45h-2.76zM952.52 447.70h1.84v1.45h-1.84zM935.96 473.64h1.84v1.45h-1.84zM938.72 473.64h7.36v1.45h-7.36zM930.44 475.50h7.36v1.45h-7.36zM938.72 475.50h7.36v1.45h-7.36zM947.00 484.76h4.60v1.45h-4.60zM934.12 486.61h8.28v1.45h-8.28zM943.32 486.61h1.84v1.45h-1.84zM979.20 486.61h3.68v1.45h-3.68zM983.80 486.61h2.76v1.45h-2.76zM946.08 492.17h3.68v1.45h-3.68zM950.68 492.17h0.92v1.45h-0.92zM934.12 494.03h4.60v1.45h-4.60zM939.64 494.03h4.60v1.45h-4.60zM945.16 494.03h0.92v1.45h-0.92zM979.20 494.03h1.84v1.45h-1.84zM981.96 494.03h4.60v1.45h-4.60zM965.40 508.85h1.84v1.45h-1.84zM968.16 508.85h3.68v1.45h-3.68zM972.76 508.85h6.44v1.45h-6.44zM980.12 508.85h2.76v1.45h-2.76zM983.80 508.85h3.68v1.45h-3.68zM958.04 510.70h7.36v1.45h-7.36zM966.32 510.70h2.76v1.45h-2.76zM965.40 518.12h6.44v1.45h-6.44zM972.76 518.12h8.28v1.45h-8.28zM981.96 518.12h8.28v1.45h-8.28zM991.16 518.12h0.92v1.45h-0.92zM951.60 523.67h6.44v1.45h-6.44zM958.96 523.67h2.76v1.45h-2.76zM927.68 538.50h7.36v1.45h-7.36zM935.96 538.50h6.44v1.45h-6.44zM943.32 538.50h4.60v1.45h-4.60zM946.08 547.76h1.84v1.45h-1.84zM948.84 547.76h7.36v1.45h-7.36zM927.68 557.03h2.76v1.45h-2.76zM931.36 557.03h7.36v1.45h-7.36zM939.64 557.03h4.60v1.45h-4.60zM945.16 557.03h1.84v1.45h-1.84zM946.08 579.26h8.28v1.45h-8.28zM955.28 579.26h0.92v1.45h-0.92zM952.52 582.97h8.28v1.45h-8.28zM961.72 582.97h1.84v1.45h-1.84zM927.68 594.09h4.60v1.45h-4.60zM933.20 594.09h2.76v1.45h-2.76zM936.88 594.09h1.84v1.45h-1.84zM939.64 594.09h1.84v1.45h-1.84zM942.40 594.09h8.28v1.45h-8.28zM951.60 594.09h8.28v1.45h-8.28zM960.80 594.09h0.92v1.45h-0.92zM930.44 610.76h3.68v1.45h-3.68zM930.44 614.47h3.68v1.45h-3.68zM927.68 623.74h7.36v1.45h-7.36zM935.96 623.74h2.76v1.45h-2.76zM939.64 623.74h1.84v1.45h-1.84zM942.40 623.74h1.84v1.45h-1.84zM946.08 645.97h4.60v1.45h-4.60zM927.68 649.68h2.76v1.45h-2.76zM931.36 649.68h6.44v1.45h-6.44zM938.72 649.68h5.52v1.45h-5.52zM927.68 670.06h4.60v1.45h-4.60zM933.20 670.06h4.60v1.45h-4.60zM938.72 670.06h0.92v1.45h-0.92zM940.56 679.33h2.76v1.45h-2.76zM927.68 688.59h1.84v1.45h-1.84zM930.44 688.59h4.60v1.45h-4.60zM935.96 688.59h4.60v1.45h-4.60zM941.48 688.59h1.84v1.45h-1.84zM944.24 688.59h3.68v1.45h-3.68zM948.84 688.59h5.52v1.45h-5.52zM940.56 703.41h3.68v1.45h-3.68zM927.68 708.97h5.52v1.45h-5.52zM934.12 708.97h1.84v1.45h-1.84zM936.88 708.97h7.36v1.45h-7.36zM945.16 708.97h2.76v1.45h-2.76zM934.12 733.06h1.84v1.45h-1.84zM936.88 733.06h2.76v1.45h-2.76zM927.68 736.77h8.28v1.45h-8.28zM936.88 736.77h3.68v1.45h-3.68zM941.48 736.77h1.84v1.45h-1.84zM934.12 759.00h4.60v1.45h-4.60zM927.68 762.71h5.52v1.45h-5.52zM934.12 762.71h4.60v1.45h-4.60zM939.64 762.71h1.84v1.45h-1.84zM942.40 762.71h1.84v1.45h-1.84zM945.16 762.71h5.52v1.45h-5.52zM951.60 762.71h3.68v1.45h-3.68zM947.92 790.51h7.36v1.45h-7.36zM934.12 792.36h3.68v1.45h-3.68zM938.72 792.36h0.92v1.45h-0.92z"/><path fill="#9cdcfe" d="M941.48 82.66h5.52v1.45h-5.52zM947.92 82.66h2.76v1.45h-2.76zM956.20 82.66h8.28v1.45h-8.28zM965.40 82.66h0.92v1.45h-0.92zM944.24 103.04h4.60v1.45h-4.60zM935.04 106.75h4.60v1.45h-4.60zM940.56 106.75h3.68v1.45h-3.68zM945.16 106.75h1.84v1.45h-1.84zM947.92 106.75h0.92v1.45h-0.92zM937.80 108.60h4.60v1.45h-4.60zM943.32 108.60h3.68v1.45h-3.68zM947.92 108.60h4.60v1.45h-4.60zM942.40 114.16h2.76v1.45h-2.76zM946.08 114.16h1.84v1.45h-1.84zM948.84 114.16h4.60v1.45h-4.60zM954.36 114.16h4.60v1.45h-4.60zM959.88 114.16h4.60v1.45h-4.60zM965.40 114.16h6.44v1.45h-6.44zM972.76 114.16h6.44v1.45h-6.44zM942.40 119.72h6.44v1.45h-6.44zM949.76 119.72h4.60v1.45h-4.60zM955.28 119.72h5.52v1.45h-5.52zM961.72 119.72h2.76v1.45h-2.76zM965.40 119.72h4.60v1.45h-4.60zM970.92 119.72h3.68v1.45h-3.68zM975.52 119.72h8.28v1.45h-8.28zM942.40 127.13h5.52v1.45h-5.52zM942.40 128.99h2.76v1.45h-2.76zM946.08 128.99h4.60v1.45h-4.60zM942.40 130.84h4.60v1.45h-4.60zM947.92 130.84h8.28v1.45h-8.28zM957.12 130.84h2.76v1.45h-2.76zM961.72 134.54h5.52v1.45h-5.52zM968.16 134.54h3.68v1.45h-3.68zM972.76 134.54h4.60v1.45h-4.60zM978.28 134.54h0.92v1.45h-0.92zM935.04 140.10h4.60v1.45h-4.60zM940.56 140.10h6.44v1.45h-6.44zM947.92 140.10h1.84v1.45h-1.84zM953.44 141.96h4.60v1.45h-4.60zM958.96 141.96h2.76v1.45h-2.76zM935.96 147.51h4.60v1.45h-4.60zM941.48 147.51h1.84v1.45h-1.84zM944.24 147.51h3.68v1.45h-3.68zM948.84 147.51h5.52v1.45h-5.52zM955.28 147.51h8.28v1.45h-8.28zM964.48 147.51h2.76v1.45h-2.76zM968.16 147.51h1.84v1.45h-1.84zM947.00 153.07h7.36v1.45h-7.36zM955.28 153.07h1.84v1.45h-1.84zM927.68 164.19h4.60v1.45h-4.60zM933.20 164.19h1.84v1.45h-1.84zM935.96 164.19h6.44v1.45h-6.44zM943.32 164.19h2.76v1.45h-2.76zM927.68 166.04h2.76v1.45h-2.76zM931.36 166.04h8.28v1.45h-8.28zM940.56 166.04h1.84v1.45h-1.84zM930.44 171.60h6.44v1.45h-6.44zM937.80 171.60h1.84v1.45h-1.84zM947.92 175.31h1.84v1.45h-1.84zM950.68 175.31h3.68v1.45h-3.68zM955.28 175.31h6.44v1.45h-6.44zM949.76 177.16h1.84v1.45h-1.84zM952.52 177.16h7.36v1.45h-7.36zM960.80 177.16h4.60v1.45h-4.60zM934.12 191.99h4.60v1.45h-4.60zM951.60 195.69h4.60v1.45h-4.60zM957.12 195.69h7.36v1.45h-7.36zM931.36 206.81h3.68v1.45h-3.68zM953.44 206.81h3.68v1.45h-3.68zM958.04 206.81h1.84v1.45h-1.84zM960.80 206.81h1.84v1.45h-1.84zM963.56 206.81h3.68v1.45h-3.68zM965.40 212.37h1.84v1.45h-1.84zM968.16 212.37h2.76v1.45h-2.76zM945.16 217.93h6.44v1.45h-6.44zM927.68 227.19h5.52v1.45h-5.52zM934.12 227.19h2.76v1.45h-2.76zM938.72 227.19h6.44v1.45h-6.44zM927.68 229.05h4.60v1.45h-4.60zM933.20 229.05h3.68v1.45h-3.68zM938.72 229.05h4.60v1.45h-4.60zM944.24 229.05h0.92v1.45h-0.92zM964.48 229.05h4.60v1.45h-4.60zM970.00 229.05h1.84v1.45h-1.84zM972.76 229.05h2.76v1.45h-2.76zM927.68 230.90h8.28v1.45h-8.28zM938.72 230.90h6.44v1.45h-6.44zM961.72 230.90h6.44v1.45h-6.44zM969.08 230.90h5.52v1.45h-5.52zM927.68 232.75h3.68v1.45h-3.68zM932.28 232.75h4.60v1.45h-4.60zM938.72 232.75h2.76v1.45h-2.76zM942.40 232.75h2.76v1.45h-2.76zM972.76 232.75h5.52v1.45h-5.52zM927.68 234.61h4.60v1.45h-4.60zM933.20 234.61h2.76v1.45h-2.76zM938.72 234.61h3.68v1.45h-3.68zM943.32 234.61h1.84v1.45h-1.84zM961.72 234.61h6.44v1.45h-6.44zM969.08 234.61h1.84v1.45h-1.84zM927.68 236.46h2.76v1.45h-2.76zM931.36 236.46h5.52v1.45h-5.52zM938.72 236.46h6.44v1.45h-6.44zM961.72 236.46h4.60v1.45h-4.60zM967.24 236.46h3.68v1.45h-3.68zM927.68 242.02h2.76v1.45h-2.76zM931.36 242.02h2.76v1.45h-2.76zM935.04 242.02h1.84v1.45h-1.84zM938.72 242.02h6.44v1.45h-6.44zM927.68 243.87h6.44v1.45h-6.44zM935.04 243.87h3.68v1.45h-3.68zM939.64 243.87h3.68v1.45h-3.68zM963.56 243.87h4.60v1.45h-4.60zM969.08 243.87h4.60v1.45h-4.60zM927.68 249.43h7.36v1.45h-7.36zM935.96 249.43h3.68v1.45h-3.68zM960.80 249.43h8.28v1.45h-8.28zM970.00 249.43h4.60v1.45h-4.60zM975.52 249.43h2.76v1.45h-2.76zM927.68 254.99h7.36v1.45h-7.36zM935.96 254.99h6.44v1.45h-6.44zM964.48 254.99h1.84v1.45h-1.84zM967.24 254.99h6.44v1.45h-6.44zM974.60 254.99h6.44v1.45h-6.44zM981.96 254.99h1.84v1.45h-1.84zM927.68 260.55h4.60v1.45h-4.60zM933.20 260.55h5.52v1.45h-5.52zM939.64 260.55h4.60v1.45h-4.60zM969.08 260.55h2.76v1.45h-2.76zM972.76 260.55h7.36v1.45h-7.36zM981.04 260.55h7.36v1.45h-7.36zM927.68 266.11h7.36v1.45h-7.36zM935.96 266.11h5.52v1.45h-5.52zM942.40 266.11h1.84v1.45h-1.84zM970.92 266.11h5.52v1.45h-5.52zM977.36 266.11h1.84v1.45h-1.84zM927.68 271.67h4.60v1.45h-4.60zM933.20 271.67h2.76v1.45h-2.76zM947.00 275.37h7.36v1.45h-7.36zM955.28 275.37h4.60v1.45h-4.60zM960.80 275.37h1.84v1.45h-1.84zM947.00 277.23h6.44v1.45h-6.44zM954.36 277.23h1.84v1.45h-1.84zM957.12 277.23h1.84v1.45h-1.84zM943.32 279.08h1.84v1.45h-1.84zM946.08 279.08h3.68v1.45h-3.68zM950.68 279.08h1.84v1.45h-1.84zM949.76 280.93h5.52v1.45h-5.52zM956.20 280.93h6.44v1.45h-6.44zM963.56 280.93h5.52v1.45h-5.52zM970.00 280.93h5.52v1.45h-5.52zM941.48 286.49h1.84v1.45h-1.84zM944.24 286.49h4.60v1.45h-4.60zM949.76 286.49h0.92v1.45h-0.92zM943.32 288.34h1.84v1.45h-1.84zM946.08 288.34h3.68v1.45h-3.68zM950.68 288.34h1.84v1.45h-1.84zM945.16 290.20h4.60v1.45h-4.60zM950.68 290.20h3.68v1.45h-3.68zM955.28 290.20h7.36v1.45h-7.36zM963.56 290.20h1.84v1.45h-1.84zM945.16 292.05h6.44v1.45h-6.44zM952.52 292.05h6.44v1.45h-6.44zM959.88 292.05h4.60v1.45h-4.60zM965.40 292.05h1.84v1.45h-1.84zM968.16 292.05h4.60v1.45h-4.60zM973.68 292.05h2.76v1.45h-2.76zM931.36 299.46h7.36v1.45h-7.36zM939.64 299.46h3.68v1.45h-3.68zM944.24 299.46h0.92v1.45h-0.92zM931.36 301.31h4.60v1.45h-4.60zM936.88 301.31h6.44v1.45h-6.44zM944.24 301.31h2.76v1.45h-2.76zM931.36 303.17h4.60v1.45h-4.60zM936.88 303.17h7.36v1.45h-7.36zM945.16 303.17h4.60v1.45h-4.60zM931.36 305.02h8.28v1.45h-8.28zM940.56 305.02h3.68v1.45h-3.68zM945.16 305.02h1.84v1.45h-1.84zM935.04 310.58h7.36v1.45h-7.36zM948.84 314.28h11.96v1.45h-11.96zM944.24 323.55h11.96v1.45h-11.96zM935.04 327.26h1.84v1.45h-1.84zM960.80 327.26h11.96v1.45h-11.96zM935.04 330.96h1.84v1.45h-1.84zM948.84 336.52h1.84v1.45h-1.84zM951.60 336.52h3.68v1.45h-3.68zM948.84 338.37h1.84v1.45h-1.84zM947.92 340.23h1.84v1.45h-1.84zM958.96 342.08h1.84v1.45h-1.84zM961.72 342.08h3.68v1.45h-3.68zM975.52 342.08h1.84v1.45h-1.84zM947.00 351.34h8.28v1.45h-8.28zM961.72 351.34h6.44v1.45h-6.44zM927.68 358.76h7.36v1.45h-7.36zM964.48 360.61h8.28v1.45h-8.28zM962.64 362.46h6.44v1.45h-6.44zM970.92 364.32h8.28v1.45h-8.28zM969.08 366.17h6.44v1.45h-6.44zM978.28 369.88h8.28v1.45h-8.28zM988.40 369.88h6.44v1.45h-6.44zM927.68 377.29h7.36v1.45h-7.36zM935.04 379.14h7.36v1.45h-7.36zM970.00 379.14h7.36v1.45h-7.36zM935.04 384.70h6.44v1.45h-6.44zM949.76 388.40h1.84v1.45h-1.84zM952.52 388.40h3.68v1.45h-3.68zM959.88 388.40h4.60v1.45h-4.60zM965.40 388.40h1.84v1.45h-1.84zM927.68 397.67h5.52v1.45h-5.52zM934.12 397.67h2.76v1.45h-2.76zM937.80 397.67h5.52v1.45h-5.52zM927.68 399.52h4.60v1.45h-4.60zM933.20 399.52h3.68v1.45h-3.68zM937.80 399.52h1.84v1.45h-1.84zM940.56 399.52h2.76v1.45h-2.76zM950.68 405.08h6.44v1.45h-6.44zM958.04 405.08h8.28v1.45h-8.28zM967.24 405.08h4.60v1.45h-4.60zM972.76 405.08h2.76v1.45h-2.76zM950.68 406.94h4.60v1.45h-4.60zM956.20 406.94h2.76v1.45h-2.76zM959.88 406.94h6.44v1.45h-6.44zM967.24 406.94h2.76v1.45h-2.76zM970.92 406.94h2.76v1.45h-2.76zM945.16 408.79h4.60v1.45h-4.60zM950.68 408.79h2.76v1.45h-2.76zM945.16 410.64h7.36v1.45h-7.36zM953.44 410.64h2.76v1.45h-2.76zM948.84 412.49h6.44v1.45h-6.44zM948.84 414.35h2.76v1.45h-2.76zM952.52 414.35h2.76v1.45h-2.76zM956.20 414.35h5.52v1.45h-5.52zM962.64 414.35h8.28v1.45h-8.28zM971.84 414.35h4.60v1.45h-4.60zM977.36 414.35h1.84v1.45h-1.84zM980.12 414.35h1.84v1.45h-1.84zM947.00 416.20h3.68v1.45h-3.68zM951.60 416.20h7.36v1.45h-7.36zM959.88 416.20h3.68v1.45h-3.68zM964.48 416.20h4.60v1.45h-4.60zM950.68 421.76h5.52v1.45h-5.52zM957.12 421.76h2.76v1.45h-2.76zM964.48 421.76h2.76v1.45h-2.76zM968.16 421.76h1.84v1.45h-1.84zM970.92 421.76h1.84v1.45h-1.84zM927.68 429.17h4.60v1.45h-4.60zM933.20 429.17h6.44v1.45h-6.44zM940.56 429.17h0.92v1.45h-0.92zM943.32 429.17h8.28v1.45h-8.28zM952.52 429.17h3.68v1.45h-3.68zM957.12 429.17h2.76v1.45h-2.76zM947.92 434.73h6.44v1.45h-6.44zM955.28 434.73h3.68v1.45h-3.68zM947.92 436.58h7.36v1.45h-7.36zM956.20 436.58h3.68v1.45h-3.68zM948.84 438.44h2.76v1.45h-2.76zM952.52 438.44h4.60v1.45h-4.60zM958.04 438.44h6.44v1.45h-6.44zM965.40 438.44h4.60v1.45h-4.60zM949.76 440.29h2.76v1.45h-2.76zM953.44 440.29h7.36v1.45h-7.36zM961.72 440.29h7.36v1.45h-7.36zM975.52 442.14h4.60v1.45h-4.60zM981.04 442.14h1.84v1.45h-1.84zM983.80 442.14h3.68v1.45h-3.68zM988.40 442.14h6.44v1.45h-6.44zM954.36 447.70h4.60v1.45h-4.60zM959.88 447.70h0.92v1.45h-0.92zM927.68 455.11h8.28v1.45h-8.28zM952.52 456.97h8.28v1.45h-8.28zM953.44 458.82h5.52v1.45h-5.52zM959.88 458.82h1.84v1.45h-1.84zM947.00 460.67h4.60v1.45h-4.60zM952.52 460.67h2.76v1.45h-2.76zM956.20 460.67h5.52v1.45h-5.52zM946.08 462.52h6.44v1.45h-6.44zM946.08 464.38h4.60v1.45h-4.60zM951.60 464.38h0.92v1.45h-0.92zM952.52 466.23h1.84v1.45h-1.84zM955.28 466.23h3.68v1.45h-3.68zM927.68 473.64h4.60v1.45h-4.60zM933.20 473.64h2.76v1.45h-2.76zM931.36 477.35h4.60v1.45h-4.60zM936.88 477.35h1.84v1.45h-1.84zM940.56 477.35h5.52v1.45h-5.52zM947.00 477.35h6.44v1.45h-6.44zM931.36 481.06h4.60v1.45h-4.60zM936.88 481.06h1.84v1.45h-1.84zM927.68 484.76h8.28v1.45h-8.28zM936.88 484.76h2.76v1.45h-2.76zM940.56 484.76h4.60v1.45h-4.60zM946.08 484.76h0.92v1.45h-0.92zM930.44 486.61h2.76v1.45h-2.76zM945.16 486.61h7.36v1.45h-7.36zM953.44 486.61h2.76v1.45h-2.76zM967.24 486.61h1.84v1.45h-1.84zM970.00 486.61h4.60v1.45h-4.60zM975.52 486.61h3.68v1.45h-3.68zM931.36 488.47h3.68v1.45h-3.68zM935.96 488.47h8.28v1.45h-8.28zM927.68 492.17h6.44v1.45h-6.44zM935.04 492.17h5.52v1.45h-5.52zM941.48 492.17h1.84v1.45h-1.84zM930.44 494.03h3.68v1.45h-3.68zM946.08 494.03h4.60v1.45h-4.60zM951.60 494.03h4.60v1.45h-4.60zM967.24 494.03h4.60v1.45h-4.60zM972.76 494.03h6.44v1.45h-6.44zM931.36 495.88h4.60v1.45h-4.60zM936.88 495.88h4.60v1.45h-4.60zM942.40 495.88h0.92v1.45h-0.92zM927.68 501.44h2.76v1.45h-2.76zM931.36 501.44h5.52v1.45h-5.52zM958.96 501.44h4.60v1.45h-4.60zM964.48 501.44h0.92v1.45h-0.92zM930.44 507.00h1.84v1.45h-1.84zM933.20 507.00h3.68v1.45h-3.68zM937.80 507.00h4.60v1.45h-4.60zM931.36 508.85h1.84v1.45h-1.84zM934.12 508.85h4.60v1.45h-4.60zM939.64 508.85h0.92v1.45h-0.92zM987.48 508.85h8.28v1.45h-8.28zM996.68 508.85h1.84v1.45h-1.84zM931.36 510.70h4.60v1.45h-4.60zM936.88 510.70h3.68v1.45h-3.68zM969.08 510.70h1.84v1.45h-1.84zM971.84 510.70h7.36v1.45h-7.36zM930.44 516.26h4.60v1.45h-4.60zM935.96 516.26h1.84v1.45h-1.84zM938.72 516.26h1.84v1.45h-1.84zM931.36 518.12h5.52v1.45h-5.52zM937.80 518.12h2.76v1.45h-2.76zM992.08 518.12h6.44v1.45h-6.44zM999.44 518.12h4.60v1.45h-4.60zM927.68 523.67h1.84v1.45h-1.84zM930.44 523.67h7.36v1.45h-7.36zM938.72 523.67h5.52v1.45h-5.52zM945.16 523.67h1.84v1.45h-1.84zM947.92 523.67h3.68v1.45h-3.68zM927.68 525.53h2.76v1.45h-2.76zM931.36 525.53h2.76v1.45h-2.76zM935.04 525.53h1.84v1.45h-1.84zM960.80 525.53h7.36v1.45h-7.36zM969.08 525.53h1.84v1.45h-1.84zM971.84 525.53h4.60v1.45h-4.60zM927.68 527.38h7.36v1.45h-7.36zM935.96 527.38h0.92v1.45h-0.92zM953.44 527.38h2.76v1.45h-2.76zM957.12 527.38h5.52v1.45h-5.52zM963.56 527.38h3.68v1.45h-3.68zM968.16 527.38h0.92v1.45h-0.92zM934.12 531.09h8.28v1.45h-8.28zM947.92 538.50h3.68v1.45h-3.68zM952.52 538.50h3.68v1.45h-3.68zM931.36 547.76h3.68v1.45h-3.68zM956.20 547.76h4.60v1.45h-4.60zM961.72 547.76h0.92v1.45h-0.92zM937.80 549.62h2.76v1.45h-2.76zM941.48 549.62h1.84v1.45h-1.84zM944.24 549.62h5.52v1.45h-5.52zM947.92 557.03h4.60v1.45h-4.60zM953.44 557.03h0.92v1.45h-0.92zM927.68 564.44h8.28v1.45h-8.28zM936.88 564.44h4.60v1.45h-4.60zM931.36 579.26h3.68v1.45h-3.68zM956.20 579.26h4.60v1.45h-4.60zM961.72 579.26h0.92v1.45h-0.92zM935.04 581.12h4.60v1.45h-4.60zM940.56 581.12h4.60v1.45h-4.60zM947.00 581.12h4.60v1.45h-4.60zM952.52 581.12h4.60v1.45h-4.60zM958.04 581.12h3.68v1.45h-3.68zM937.80 582.97h4.60v1.45h-4.60zM943.32 582.97h0.92v1.45h-0.92zM963.56 582.97h1.84v1.45h-1.84zM966.32 582.97h3.68v1.45h-3.68zM970.92 582.97h2.76v1.45h-2.76zM961.72 594.09h4.60v1.45h-4.60zM967.24 594.09h7.36v1.45h-7.36zM927.68 605.21h5.52v1.45h-5.52zM934.12 605.21h1.84v1.45h-1.84zM936.88 605.21h1.84v1.45h-1.84zM939.64 605.21h4.60v1.45h-4.60zM927.68 608.91h4.60v1.45h-4.60zM933.20 608.91h2.76v1.45h-2.76zM936.88 608.91h1.84v1.45h-1.84zM939.64 608.91h1.84v1.45h-1.84zM934.12 610.76h4.60v1.45h-4.60zM939.64 610.76h2.76v1.45h-2.76zM944.24 610.76h5.52v1.45h-5.52zM950.68 610.76h2.76v1.45h-2.76zM957.12 610.76h6.44v1.45h-6.44zM966.32 610.76h4.60v1.45h-4.60zM971.84 610.76h6.44v1.45h-6.44zM979.20 610.76h7.36v1.45h-7.36zM931.36 612.62h3.68v1.45h-3.68zM935.96 612.62h3.68v1.45h-3.68zM940.56 612.62h1.84v1.45h-1.84zM934.12 614.47h2.76v1.45h-2.76zM937.80 614.47h4.60v1.45h-4.60zM944.24 614.47h7.36v1.45h-7.36zM956.20 614.47h4.60v1.45h-4.60zM961.72 614.47h1.84v1.45h-1.84zM965.40 614.47h8.28v1.45h-8.28zM974.60 614.47h7.36v1.45h-7.36zM982.88 614.47h1.84v1.45h-1.84zM931.36 616.32h4.60v1.45h-4.60zM936.88 616.32h2.76v1.45h-2.76zM940.56 616.32h1.84v1.45h-1.84zM934.12 620.03h8.28v1.45h-8.28zM943.32 620.03h0.92v1.45h-0.92zM943.32 623.74h4.60v1.45h-4.60zM948.84 623.74h2.76v1.45h-2.76zM927.68 631.15h1.84v1.45h-1.84zM930.44 631.15h3.68v1.45h-3.68zM935.04 631.15h2.76v1.45h-2.76zM938.72 631.15h0.92v1.45h-0.92zM934.12 645.97h5.52v1.45h-5.52zM940.56 645.97h4.60v1.45h-4.60zM951.60 645.97h7.36v1.45h-7.36zM943.32 649.68h4.60v1.45h-4.60zM930.44 657.09h4.60v1.45h-4.60zM935.96 657.09h0.92v1.45h-0.92zM931.36 660.80h4.60v1.45h-4.60zM936.88 660.80h0.92v1.45h-0.92zM938.72 670.06h5.52v1.45h-5.52zM945.16 670.06h2.76v1.45h-2.76zM956.20 670.06h2.76v1.45h-2.76zM959.88 670.06h4.60v1.45h-4.60zM965.40 670.06h0.92v1.45h-0.92zM929.52 677.47h4.60v1.45h-4.60zM935.04 677.47h5.52v1.45h-5.52zM937.80 679.33h2.76v1.45h-2.76zM944.24 679.33h6.44v1.45h-6.44zM951.60 679.33h2.76v1.45h-2.76zM927.68 681.18h4.60v1.45h-4.60zM933.20 681.18h0.92v1.45h-0.92zM935.04 681.18h3.68v1.45h-3.68zM939.64 681.18h5.52v1.45h-5.52zM946.08 681.18h8.28v1.45h-8.28zM955.28 681.18h1.84v1.45h-1.84zM934.12 684.88h8.28v1.45h-8.28zM943.32 684.88h7.36v1.45h-7.36zM953.44 688.59h3.68v1.45h-3.68zM958.04 688.59h4.60v1.45h-4.60zM967.24 688.59h1.84v1.45h-1.84zM970.00 688.59h2.76v1.45h-2.76zM973.68 688.59h3.68v1.45h-3.68zM927.68 696.00h3.68v1.45h-3.68zM932.28 696.00h1.84v1.45h-1.84zM935.04 696.00h1.84v1.45h-1.84zM937.80 696.00h2.76v1.45h-2.76zM941.48 696.00h2.76v1.45h-2.76zM945.16 696.00h8.28v1.45h-8.28zM929.52 697.86h6.44v1.45h-6.44zM936.88 697.86h1.84v1.45h-1.84zM927.68 703.41h3.68v1.45h-3.68zM932.28 703.41h2.76v1.45h-2.76zM935.96 703.41h3.68v1.45h-3.68zM944.24 703.41h4.60v1.45h-4.60zM949.76 703.41h2.76v1.45h-2.76zM953.44 703.41h8.28v1.45h-8.28zM962.64 703.41h0.92v1.45h-0.92zM940.56 705.27h2.76v1.45h-2.76zM944.24 705.27h1.84v1.45h-1.84zM947.00 705.27h3.68v1.45h-3.68zM952.52 705.27h2.76v1.45h-2.76zM956.20 705.27h2.76v1.45h-2.76zM947.92 708.97h4.60v1.45h-4.60zM927.68 716.39h2.76v1.45h-2.76zM931.36 716.39h3.68v1.45h-3.68zM935.96 716.39h2.76v1.45h-2.76zM931.36 720.09h1.84v1.45h-1.84zM934.12 720.09h4.60v1.45h-4.60zM939.64 720.09h6.44v1.45h-6.44zM947.00 720.09h1.84v1.45h-1.84zM949.76 720.09h1.84v1.45h-1.84zM931.36 723.80h1.84v1.45h-1.84zM927.68 731.21h7.36v1.45h-7.36zM937.80 731.21h3.68v1.45h-3.68zM942.40 731.21h2.76v1.45h-2.76zM946.08 731.21h3.68v1.45h-3.68zM947.00 733.06h6.44v1.45h-6.44zM954.36 733.06h4.60v1.45h-4.60zM959.88 733.06h6.44v1.45h-6.44zM968.16 733.06h5.52v1.45h-5.52zM974.60 733.06h1.84v1.45h-1.84zM979.20 733.06h3.68v1.45h-3.68zM983.80 733.06h5.52v1.45h-5.52zM990.24 733.06h1.84v1.45h-1.84zM943.32 736.77h1.84v1.45h-1.84zM927.68 744.18h4.60v1.45h-4.60zM933.20 744.18h6.44v1.45h-6.44zM927.68 757.15h5.52v1.45h-5.52zM934.12 757.15h0.92v1.45h-0.92zM937.80 757.15h6.44v1.45h-6.44zM945.16 757.15h3.68v1.45h-3.68zM947.00 759.00h4.60v1.45h-4.60zM952.52 759.00h4.60v1.45h-4.60zM958.04 759.00h8.28v1.45h-8.28zM968.16 759.00h4.60v1.45h-4.60zM973.68 759.00h2.76v1.45h-2.76zM979.20 759.00h1.84v1.45h-1.84zM981.96 759.00h3.68v1.45h-3.68zM986.56 759.00h4.60v1.45h-4.60zM955.28 762.71h2.76v1.45h-2.76zM958.96 762.71h7.36v1.45h-7.36zM927.68 770.12h1.84v1.45h-1.84zM930.44 770.12h5.52v1.45h-5.52zM936.88 770.12h8.28v1.45h-8.28zM927.68 790.51h8.28v1.45h-8.28zM936.88 790.51h4.60v1.45h-4.60zM942.40 790.51h4.60v1.45h-4.60zM939.64 792.36h4.60v1.45h-4.60zM945.16 792.36h2.76v1.45h-2.76zM948.84 792.36h6.44v1.45h-6.44zM958.96 792.36h4.60v1.45h-4.60zM964.48 792.36h2.76v1.45h-2.76zM969.08 792.36h4.60v1.45h-4.60zM974.60 792.36h7.36v1.45h-7.36zM982.88 792.36h6.44v1.45h-6.44z"/><path fill="#b0b0b0" d="M971.84 82.66h1.84v1.45h-1.84zM944.24 145.66h3.68v1.45h-3.68zM963.56 153.07h3.68v1.45h-3.68zM972.76 153.07h2.76v1.45h-2.76zM937.80 173.46h1.84v1.45h-1.84zM931.36 190.13h1.84v1.45h-1.84zM959.88 227.19h1.84v1.45h-1.84zM962.64 227.19h3.68v1.45h-3.68zM993.00 230.90h1.84v1.45h-1.84zM991.16 236.46h1.84v1.45h-1.84zM935.96 271.67h3.68v1.45h-3.68zM947.00 305.02h2.76v1.45h-2.76zM927.68 306.87h1.84v1.45h-1.84zM960.80 314.28h0.92v1.45h-0.92zM967.24 314.28h1.84v1.45h-1.84zM977.36 314.28h0.92v1.45h-0.92zM982.88 314.28h0.92v1.45h-0.92zM930.44 321.70h0.92v1.45h-0.92zM956.20 323.55h0.92v1.45h-0.92zM961.72 323.55h0.92v1.45h-0.92zM937.80 327.26h0.92v1.45h-0.92zM947.00 327.26h0.92v1.45h-0.92zM972.76 327.26h0.92v1.45h-0.92zM983.80 327.26h0.92v1.45h-0.92zM935.04 329.11h0.92v1.45h-0.92zM937.80 330.96h0.92v1.45h-0.92zM947.00 330.96h0.92v1.45h-0.92zM947.00 336.52h0.92v1.45h-0.92zM950.68 336.52h0.92v1.45h-0.92zM955.28 336.52h0.92v1.45h-0.92zM947.00 338.37h0.92v1.45h-0.92zM950.68 338.37h0.92v1.45h-0.92zM959.88 338.37h0.92v1.45h-0.92zM946.08 340.23h0.92v1.45h-0.92zM949.76 340.23h0.92v1.45h-0.92zM959.88 340.23h1.84v1.45h-1.84zM963.56 340.23h0.92v1.45h-0.92zM952.52 342.08h0.92v1.45h-0.92zM956.20 342.08h1.84v1.45h-1.84zM960.80 342.08h0.92v1.45h-0.92zM966.32 342.08h1.84v1.45h-1.84zM977.36 342.08h0.92v1.45h-0.92zM987.48 342.08h0.92v1.45h-0.92zM942.40 345.79h0.92v1.45h-0.92zM950.68 347.64h0.92v1.45h-0.92zM954.36 347.64h0.92v1.45h-0.92zM968.16 347.64h0.92v1.45h-0.92zM970.92 347.64h0.92v1.45h-0.92zM983.80 347.64h0.92v1.45h-0.92zM990.24 347.64h0.92v1.45h-0.92zM1009.56 347.64h0.92v1.45h-0.92zM955.28 351.34h0.92v1.45h-0.92zM959.88 351.34h0.92v1.45h-0.92zM968.16 351.34h0.92v1.45h-0.92zM974.60 351.34h1.84v1.45h-1.84zM984.72 351.34h0.92v1.45h-0.92zM990.24 351.34h0.92v1.45h-0.92zM935.96 358.76h0.92v1.45h-0.92zM948.84 360.61h0.92v1.45h-0.92zM973.68 360.61h0.92v1.45h-0.92zM947.00 362.46h0.92v1.45h-0.92zM970.00 362.46h0.92v1.45h-0.92zM949.76 364.32h0.92v1.45h-0.92zM980.12 364.32h0.92v1.45h-0.92zM947.92 366.17h0.92v1.45h-0.92zM976.44 366.17h0.92v1.45h-0.92zM953.44 368.02h0.92v1.45h-0.92zM959.88 368.02h0.92v1.45h-0.92zM950.68 369.88h0.92v1.45h-0.92zM986.56 369.88h0.92v1.45h-0.92zM959.88 377.29h0.92v1.45h-0.92zM971.84 388.40h1.84v1.45h-1.84zM952.52 397.67h7.36v1.45h-7.36zM960.80 397.67h5.52v1.45h-5.52zM967.24 397.67h2.76v1.45h-2.76zM970.92 397.67h3.68v1.45h-3.68zM975.52 397.67h6.44v1.45h-6.44zM982.88 397.67h3.68v1.45h-3.68zM987.48 397.67h1.84v1.45h-1.84zM934.12 403.23h1.84v1.45h-1.84zM957.12 408.79h1.84v1.45h-1.84zM959.88 408.79h7.36v1.45h-7.36zM968.16 408.79h4.60v1.45h-4.60zM927.68 418.05h1.84v1.45h-1.84zM977.36 421.76h1.84v1.45h-1.84zM941.48 429.17h1.84v1.45h-1.84zM934.12 432.88h1.84v1.45h-1.84zM927.68 444.00h1.84v1.45h-1.84zM976.44 447.70h1.84v1.45h-1.84zM935.96 455.11h2.76v1.45h-2.76zM927.68 468.08h1.84v1.45h-1.84zM955.28 473.64h3.68v1.45h-3.68zM938.72 477.35h1.84v1.45h-1.84zM938.72 481.06h3.68v1.45h-3.68zM964.48 484.76h2.76v1.45h-2.76zM960.80 486.61h1.84v1.45h-1.84zM986.56 486.61h1.84v1.45h-1.84zM944.24 492.17h0.92v1.45h-0.92zM963.56 492.17h2.76v1.45h-2.76zM960.80 494.03h0.92v1.45h-0.92zM986.56 494.03h0.92v1.45h-0.92zM957.12 501.44h0.92v1.45h-0.92zM965.40 501.44h0.92v1.45h-0.92zM964.48 508.85h0.92v1.45h-0.92zM961.72 518.12h0.92v1.45h-0.92zM944.24 523.67h0.92v1.45h-0.92zM976.44 525.53h3.68v1.45h-3.68zM951.60 527.38h0.92v1.45h-0.92zM935.04 547.76h0.92v1.45h-0.92zM958.96 557.03h1.84v1.45h-1.84zM943.32 564.44h1.84v1.45h-1.84zM927.68 573.70h1.84v1.45h-1.84zM935.04 579.26h0.92v1.45h-0.92zM945.16 605.21h0.92v1.45h-0.92zM941.48 608.91h1.84v1.45h-1.84zM942.40 612.62h0.92v1.45h-0.92zM942.40 616.32h2.76v1.45h-2.76zM957.12 623.74h1.84v1.45h-1.84zM939.64 631.15h3.68v1.45h-3.68zM940.56 642.27h3.68v1.45h-3.68zM927.68 644.12h1.84v1.45h-1.84zM958.96 645.97h2.76v1.45h-2.76zM953.44 649.68h0.92v1.45h-0.92zM936.88 657.09h0.92v1.45h-0.92zM937.80 658.94h0.92v1.45h-0.92zM937.80 660.80h3.68v1.45h-3.68zM942.40 660.80h1.84v1.45h-1.84zM937.80 662.65h0.92v1.45h-0.92zM937.80 666.36h0.92v1.45h-0.92zM973.68 670.06h0.92v1.45h-0.92zM940.56 677.47h4.60v1.45h-4.60zM955.28 679.33h0.92v1.45h-0.92zM934.12 681.18h0.92v1.45h-0.92zM945.16 681.18h0.92v1.45h-0.92zM966.32 688.59h0.92v1.45h-0.92zM981.96 688.59h0.92v1.45h-0.92zM934.12 696.00h0.92v1.45h-0.92zM944.24 696.00h0.92v1.45h-0.92zM938.72 697.86h2.76v1.45h-2.76zM939.64 703.41h0.92v1.45h-0.92zM952.52 703.41h0.92v1.45h-0.92zM937.80 705.27h2.76v1.45h-2.76zM951.60 705.27h0.92v1.45h-0.92zM958.04 708.97h0.92v1.45h-0.92zM939.64 716.39h3.68v1.45h-3.68zM938.72 720.09h0.92v1.45h-0.92zM927.68 727.50h1.84v1.45h-1.84zM935.04 731.21h2.76v1.45h-2.76zM948.84 736.77h2.76v1.45h-2.76zM939.64 744.18h3.68v1.45h-3.68zM927.68 753.45h1.84v1.45h-1.84zM935.04 757.15h2.76v1.45h-2.76zM970.00 762.71h3.68v1.45h-3.68zM946.08 770.12h2.76v1.45h-2.76zM927.68 786.80h1.84v1.45h-1.84z"/><path fill="#ce9178" d="M927.68 84.51h2.76v1.45h-2.76zM927.68 86.37h4.60v1.45h-4.60zM933.20 86.37h7.36v1.45h-7.36zM941.48 86.37h1.84v1.45h-1.84zM944.24 86.37h4.60v1.45h-4.60zM949.76 86.37h3.68v1.45h-3.68zM954.36 86.37h8.28v1.45h-8.28zM963.56 86.37h2.76v1.45h-2.76zM967.24 86.37h4.60v1.45h-4.60zM972.76 86.37h7.36v1.45h-7.36zM981.04 86.37h4.60v1.45h-4.60zM986.56 86.37h7.36v1.45h-7.36zM994.84 86.37h4.60v1.45h-4.60zM927.68 90.07h4.60v1.45h-4.60zM933.20 90.07h1.84v1.45h-1.84zM935.96 90.07h2.76v1.45h-2.76zM939.64 90.07h4.60v1.45h-4.60zM945.16 90.07h3.68v1.45h-3.68zM927.68 91.92h7.36v1.45h-7.36zM935.96 91.92h5.52v1.45h-5.52zM942.40 91.92h4.60v1.45h-4.60zM947.92 91.92h8.28v1.45h-8.28zM957.12 91.92h2.76v1.45h-2.76zM960.80 91.92h3.68v1.45h-3.68zM965.40 91.92h4.60v1.45h-4.60zM970.92 91.92h4.60v1.45h-4.60zM976.44 91.92h5.52v1.45h-5.52zM982.88 91.92h1.84v1.45h-1.84zM985.64 91.92h3.68v1.45h-3.68zM990.24 91.92h4.60v1.45h-4.60zM995.76 91.92h3.68v1.45h-3.68zM927.68 93.78h2.76v1.45h-2.76zM931.36 93.78h5.52v1.45h-5.52zM937.80 93.78h4.60v1.45h-4.60zM943.32 93.78h4.60v1.45h-4.60zM948.84 93.78h5.52v1.45h-5.52zM955.28 93.78h7.36v1.45h-7.36zM963.56 93.78h4.60v1.45h-4.60zM969.08 93.78h3.68v1.45h-3.68zM973.68 93.78h1.84v1.45h-1.84zM976.44 93.78h8.28v1.45h-8.28zM985.64 93.78h4.60v1.45h-4.60zM991.16 93.78h4.60v1.45h-4.60zM927.68 95.63h8.28v1.45h-8.28zM936.88 95.63h6.44v1.45h-6.44zM944.24 95.63h2.76v1.45h-2.76zM947.92 95.63h8.28v1.45h-8.28zM957.12 95.63h1.84v1.45h-1.84zM959.88 95.63h5.52v1.45h-5.52zM966.32 95.63h6.44v1.45h-6.44zM973.68 95.63h6.44v1.45h-6.44zM981.04 95.63h7.36v1.45h-7.36zM989.32 95.63h7.36v1.45h-7.36zM997.60 95.63h1.84v1.45h-1.84zM927.68 97.48h2.76v1.45h-2.76zM934.12 103.04h5.52v1.45h-5.52zM940.56 103.04h1.84v1.45h-1.84zM952.52 108.60h7.36v1.45h-7.36zM960.80 108.60h2.76v1.45h-2.76zM943.32 116.01h5.52v1.45h-5.52zM949.76 116.01h1.84v1.45h-1.84zM968.16 130.84h3.68v1.45h-3.68zM972.76 130.84h3.68v1.45h-3.68zM942.40 134.54h4.60v1.45h-4.60zM947.92 134.54h7.36v1.45h-7.36zM956.20 134.54h4.60v1.45h-4.60zM942.40 141.96h4.60v1.45h-4.60zM947.92 141.96h5.52v1.45h-5.52zM937.80 149.37h7.36v1.45h-7.36zM946.08 149.37h1.84v1.45h-1.84zM955.28 149.37h5.52v1.45h-5.52zM961.72 149.37h7.36v1.45h-7.36zM927.68 154.93h1.84v1.45h-1.84zM927.68 156.78h2.76v1.45h-2.76zM931.36 156.78h3.68v1.45h-3.68zM935.96 156.78h7.36v1.45h-7.36zM944.24 156.78h2.76v1.45h-2.76zM947.92 156.78h2.76v1.45h-2.76zM951.60 156.78h1.84v1.45h-1.84zM954.36 156.78h6.44v1.45h-6.44zM961.72 156.78h1.84v1.45h-1.84zM927.68 158.63h6.44v1.45h-6.44zM935.04 158.63h1.84v1.45h-1.84zM937.80 158.63h2.76v1.45h-2.76zM941.48 158.63h5.52v1.45h-5.52zM947.92 158.63h4.60v1.45h-4.60zM953.44 158.63h3.68v1.45h-3.68zM958.04 158.63h5.52v1.45h-5.52zM964.48 158.63h4.60v1.45h-4.60zM970.00 158.63h8.28v1.45h-8.28zM979.20 158.63h1.84v1.45h-1.84zM981.96 158.63h8.28v1.45h-8.28zM927.68 160.49h2.76v1.45h-2.76zM935.04 175.31h4.60v1.45h-4.60zM940.56 175.31h4.60v1.45h-4.60zM946.08 175.31h0.92v1.45h-0.92zM935.04 177.16h6.44v1.45h-6.44zM942.40 177.16h5.52v1.45h-5.52zM948.84 177.16h0.92v1.45h-0.92zM935.04 179.02h4.60v1.45h-4.60zM940.56 179.02h3.68v1.45h-3.68zM945.16 179.02h3.68v1.45h-3.68zM935.04 180.87h1.84v1.45h-1.84zM937.80 180.87h4.60v1.45h-4.60zM943.32 180.87h2.76v1.45h-2.76zM947.00 180.87h1.84v1.45h-1.84zM949.76 180.87h2.76v1.45h-2.76zM935.04 182.72h4.60v1.45h-4.60zM940.56 182.72h4.60v1.45h-4.60zM946.08 182.72h2.76v1.45h-2.76zM949.76 182.72h2.76v1.45h-2.76zM935.04 184.57h4.60v1.45h-4.60zM940.56 184.57h6.44v1.45h-6.44zM935.04 186.43h8.28v1.45h-8.28zM944.24 186.43h2.76v1.45h-2.76zM935.04 188.28h4.60v1.45h-4.60zM940.56 188.28h4.60v1.45h-4.60zM946.08 188.28h0.92v1.45h-0.92zM947.92 188.28h2.76v1.45h-2.76zM951.60 188.28h3.68v1.45h-3.68zM956.20 188.28h4.60v1.45h-4.60zM961.72 188.28h7.36v1.45h-7.36zM927.68 197.55h2.76v1.45h-2.76zM927.68 199.40h4.60v1.45h-4.60zM933.20 199.40h7.36v1.45h-7.36zM941.48 199.40h7.36v1.45h-7.36zM949.76 199.40h5.52v1.45h-5.52zM956.20 199.40h4.60v1.45h-4.60zM961.72 199.40h6.44v1.45h-6.44zM969.08 199.40h2.76v1.45h-2.76zM972.76 199.40h5.52v1.45h-5.52zM927.68 201.25h2.76v1.45h-2.76zM968.16 206.81h4.60v1.45h-4.60zM973.68 206.81h3.68v1.45h-3.68zM978.28 206.81h1.84v1.45h-1.84zM981.04 206.81h6.44v1.45h-6.44zM988.40 206.81h6.44v1.45h-6.44zM995.76 206.81h4.60v1.45h-4.60zM937.80 212.37h4.60v1.45h-4.60zM943.32 212.37h4.60v1.45h-4.60zM948.84 212.37h4.60v1.45h-4.60zM954.36 212.37h5.52v1.45h-5.52zM960.80 212.37h1.84v1.45h-1.84zM963.56 212.37h1.84v1.45h-1.84zM927.68 219.78h2.76v1.45h-2.76zM927.68 221.63h2.76v1.45h-2.76zM931.36 221.63h1.84v1.45h-1.84zM934.12 221.63h8.28v1.45h-8.28zM943.32 221.63h4.60v1.45h-4.60zM948.84 221.63h6.44v1.45h-6.44zM956.20 221.63h2.76v1.45h-2.76zM959.88 221.63h2.76v1.45h-2.76zM963.56 221.63h6.44v1.45h-6.44zM970.92 221.63h6.44v1.45h-6.44zM978.28 221.63h3.68v1.45h-3.68zM927.68 223.49h2.76v1.45h-2.76zM948.84 227.19h5.52v1.45h-5.52zM955.28 227.19h4.60v1.45h-4.60zM948.84 229.05h4.60v1.45h-4.60zM954.36 229.05h2.76v1.45h-2.76zM958.04 229.05h3.68v1.45h-3.68zM979.20 229.05h3.68v1.45h-3.68zM983.80 229.05h5.52v1.45h-5.52zM948.84 230.90h8.28v1.45h-8.28zM958.04 230.90h3.68v1.45h-3.68zM975.52 230.90h8.28v1.45h-8.28zM984.72 230.90h8.28v1.45h-8.28zM948.84 232.75h6.44v1.45h-6.44zM956.20 232.75h2.76v1.45h-2.76zM959.88 232.75h1.84v1.45h-1.84zM961.72 232.75h8.28v1.45h-8.28zM970.92 232.75h1.84v1.45h-1.84zM948.84 234.61h7.36v1.45h-7.36zM957.12 234.61h2.76v1.45h-2.76zM960.80 234.61h0.92v1.45h-0.92zM970.92 234.61h6.44v1.45h-6.44zM978.28 234.61h4.60v1.45h-4.60zM983.80 234.61h1.84v1.45h-1.84zM948.84 236.46h7.36v1.45h-7.36zM957.12 236.46h2.76v1.45h-2.76zM960.80 236.46h0.92v1.45h-0.92zM970.92 236.46h2.76v1.45h-2.76zM974.60 236.46h7.36v1.45h-7.36zM982.88 236.46h4.60v1.45h-4.60zM988.40 236.46h2.76v1.45h-2.76zM946.08 242.02h6.44v1.45h-6.44zM953.44 242.02h4.60v1.45h-4.60zM958.96 242.02h1.84v1.45h-1.84zM969.08 242.02h3.68v1.45h-3.68zM973.68 242.02h3.68v1.45h-3.68zM978.28 242.02h1.84v1.45h-1.84zM981.04 242.02h7.36v1.45h-7.36zM944.24 243.87h6.44v1.45h-6.44zM951.60 243.87h8.28v1.45h-8.28zM960.80 243.87h2.76v1.45h-2.76zM943.32 254.99h2.76v1.45h-2.76zM947.00 254.99h3.68v1.45h-3.68zM951.60 254.99h4.60v1.45h-4.60zM957.12 254.99h5.52v1.45h-5.52zM963.56 254.99h0.92v1.45h-0.92zM945.16 260.55h1.84v1.45h-1.84zM947.92 260.55h4.60v1.45h-4.60zM953.44 260.55h4.60v1.45h-4.60zM958.96 260.55h6.44v1.45h-6.44zM966.32 260.55h1.84v1.45h-1.84zM944.24 266.11h6.44v1.45h-6.44zM951.60 266.11h4.60v1.45h-4.60zM957.12 266.11h7.36v1.45h-7.36zM965.40 266.11h5.52v1.45h-5.52zM931.36 275.37h4.60v1.45h-4.60zM936.88 275.37h2.76v1.45h-2.76zM940.56 275.37h4.60v1.45h-4.60zM946.08 275.37h0.92v1.45h-0.92zM931.36 277.23h8.28v1.45h-8.28zM940.56 277.23h4.60v1.45h-4.60zM946.08 277.23h0.92v1.45h-0.92zM931.36 279.08h6.44v1.45h-6.44zM938.72 279.08h2.76v1.45h-2.76zM942.40 279.08h0.92v1.45h-0.92zM931.36 280.93h3.68v1.45h-3.68zM935.96 280.93h6.44v1.45h-6.44zM943.32 280.93h2.76v1.45h-2.76zM947.00 280.93h2.76v1.45h-2.76zM931.36 286.49h5.52v1.45h-5.52zM937.80 286.49h3.68v1.45h-3.68zM931.36 288.34h8.28v1.45h-8.28zM940.56 288.34h2.76v1.45h-2.76zM931.36 290.20h7.36v1.45h-7.36zM939.64 290.20h2.76v1.45h-2.76zM943.32 290.20h1.84v1.45h-1.84zM931.36 292.05h1.84v1.45h-1.84zM934.12 292.05h7.36v1.45h-7.36zM942.40 292.05h2.76v1.45h-2.76zM931.36 297.61h1.84v1.45h-1.84zM934.12 297.61h5.52v1.45h-5.52zM940.56 297.61h2.76v1.45h-2.76zM944.24 297.61h2.76v1.45h-2.76zM927.68 316.14h2.76v1.45h-2.76zM927.68 317.99h6.44v1.45h-6.44zM935.04 317.99h9.20v1.45h-9.20zM945.16 317.99h7.36v1.45h-7.36zM953.44 317.99h3.68v1.45h-3.68zM958.04 317.99h4.60v1.45h-4.60zM963.56 317.99h7.36v1.45h-7.36zM971.84 317.99h6.44v1.45h-6.44zM979.20 317.99h5.52v1.45h-5.52zM985.64 317.99h8.28v1.45h-8.28zM994.84 317.99h9.20v1.45h-9.20zM927.68 319.84h2.76v1.45h-2.76zM981.04 327.26h2.76v1.45h-2.76zM985.64 327.26h7.36v1.45h-7.36zM935.04 336.52h11.96v1.45h-11.96zM935.04 338.37h11.96v1.45h-11.96zM935.04 340.23h11.04v1.45h-11.04zM935.04 342.08h17.48v1.45h-17.48zM938.72 347.64h11.96v1.45h-11.96zM956.20 347.64h11.96v1.45h-11.96zM972.76 347.64h11.04v1.45h-11.04zM992.08 347.64h17.48v1.45h-17.48zM927.68 353.20h2.76v1.45h-2.76zM927.68 355.05h6.44v1.45h-6.44zM935.04 355.05h7.36v1.45h-7.36zM943.32 355.05h7.36v1.45h-7.36zM951.60 355.05h2.76v1.45h-2.76zM955.28 355.05h5.52v1.45h-5.52zM961.72 355.05h9.20v1.45h-9.20zM927.68 356.90h2.76v1.45h-2.76zM931.36 360.61h17.48v1.45h-17.48zM931.36 362.46h15.64v1.45h-15.64zM931.36 364.32h18.40v1.45h-18.40zM931.36 366.17h16.56v1.45h-16.56zM931.36 368.02h22.08v1.45h-22.08zM931.36 369.88h19.32v1.45h-19.32zM935.96 377.29h22.08v1.45h-22.08zM943.32 379.14h18.40v1.45h-18.40zM978.28 379.14h16.56v1.45h-16.56zM927.68 390.26h1.84v1.45h-1.84zM927.68 392.11h5.52v1.45h-5.52zM934.12 392.11h6.44v1.45h-6.44zM941.48 392.11h4.60v1.45h-4.60zM947.00 392.11h4.60v1.45h-4.60zM952.52 392.11h8.28v1.45h-8.28zM961.72 392.11h7.36v1.45h-7.36zM970.00 392.11h4.60v1.45h-4.60zM975.52 392.11h3.68v1.45h-3.68zM927.68 393.96h2.76v1.45h-2.76zM931.36 405.08h4.60v1.45h-4.60zM936.88 405.08h8.28v1.45h-8.28zM946.08 405.08h4.60v1.45h-4.60zM931.36 406.94h3.68v1.45h-3.68zM935.96 406.94h2.76v1.45h-2.76zM939.64 406.94h7.36v1.45h-7.36zM947.92 406.94h2.76v1.45h-2.76zM931.36 408.79h2.76v1.45h-2.76zM935.04 408.79h4.60v1.45h-4.60zM940.56 408.79h4.60v1.45h-4.60zM931.36 410.64h4.60v1.45h-4.60zM936.88 410.64h4.60v1.45h-4.60zM942.40 410.64h2.76v1.45h-2.76zM957.12 410.64h1.84v1.45h-1.84zM959.88 410.64h2.76v1.45h-2.76zM963.56 410.64h2.76v1.45h-2.76zM967.24 410.64h3.68v1.45h-3.68zM971.84 410.64h1.84v1.45h-1.84zM931.36 412.49h4.60v1.45h-4.60zM936.88 412.49h5.52v1.45h-5.52zM943.32 412.49h5.52v1.45h-5.52zM931.36 414.35h2.76v1.45h-2.76zM935.04 414.35h6.44v1.45h-6.44zM942.40 414.35h4.60v1.45h-4.60zM947.92 414.35h0.92v1.45h-0.92zM931.36 416.20h4.60v1.45h-4.60zM936.88 416.20h1.84v1.45h-1.84zM939.64 416.20h7.36v1.45h-7.36zM927.68 423.61h2.76v1.45h-2.76zM927.68 425.46h6.44v1.45h-6.44zM935.04 425.46h5.52v1.45h-5.52zM941.48 425.46h7.36v1.45h-7.36zM949.76 425.46h5.52v1.45h-5.52zM956.20 425.46h8.28v1.45h-8.28zM965.40 425.46h6.44v1.45h-6.44zM972.76 425.46h6.44v1.45h-6.44zM980.12 425.46h1.84v1.45h-1.84zM982.88 425.46h0.92v1.45h-0.92zM927.68 427.32h1.84v1.45h-1.84zM931.36 434.73h4.60v1.45h-4.60zM936.88 434.73h4.60v1.45h-4.60zM942.40 434.73h5.52v1.45h-5.52zM931.36 436.58h4.60v1.45h-4.60zM936.88 436.58h8.28v1.45h-8.28zM946.08 436.58h1.84v1.45h-1.84zM931.36 438.44h6.44v1.45h-6.44zM938.72 438.44h8.28v1.45h-8.28zM931.36 440.29h3.68v1.45h-3.68zM935.96 440.29h4.60v1.45h-4.60zM941.48 440.29h3.68v1.45h-3.68zM946.08 440.29h1.84v1.45h-1.84zM931.36 442.14h7.36v1.45h-7.36zM939.64 442.14h4.60v1.45h-4.60zM945.16 442.14h2.76v1.45h-2.76zM927.68 449.55h2.76v1.45h-2.76zM927.68 451.41h3.68v1.45h-3.68zM932.28 451.41h3.68v1.45h-3.68zM936.88 451.41h4.60v1.45h-4.60zM942.40 451.41h7.36v1.45h-7.36zM950.68 451.41h6.44v1.45h-6.44zM958.04 451.41h3.68v1.45h-3.68zM962.64 451.41h4.60v1.45h-4.60zM968.16 451.41h8.28v1.45h-8.28zM977.36 451.41h6.44v1.45h-6.44zM984.72 451.41h0.92v1.45h-0.92zM927.68 453.26h2.76v1.45h-2.76zM931.36 456.97h8.28v1.45h-8.28zM940.56 456.97h1.84v1.45h-1.84zM943.32 456.97h3.68v1.45h-3.68zM947.92 456.97h2.76v1.45h-2.76zM931.36 458.82h4.60v1.45h-4.60zM936.88 458.82h1.84v1.45h-1.84zM939.64 458.82h5.52v1.45h-5.52zM946.08 458.82h2.76v1.45h-2.76zM949.76 458.82h0.92v1.45h-0.92zM931.36 460.67h3.68v1.45h-3.68zM935.96 460.67h3.68v1.45h-3.68zM940.56 460.67h5.52v1.45h-5.52zM931.36 462.52h5.52v1.45h-5.52zM937.80 462.52h5.52v1.45h-5.52zM944.24 462.52h1.84v1.45h-1.84zM931.36 464.38h2.76v1.45h-2.76zM935.04 464.38h4.60v1.45h-4.60zM940.56 464.38h5.52v1.45h-5.52zM931.36 466.23h4.60v1.45h-4.60zM936.88 466.23h5.52v1.45h-5.52zM943.32 466.23h4.60v1.45h-4.60zM948.84 466.23h2.76v1.45h-2.76zM947.00 473.64h4.60v1.45h-4.60zM952.52 473.64h1.84v1.45h-1.84zM951.60 484.76h4.60v1.45h-4.60zM957.12 484.76h6.44v1.45h-6.44zM990.24 486.61h5.52v1.45h-5.52zM951.60 492.17h4.60v1.45h-4.60zM957.12 492.17h4.60v1.45h-4.60zM988.40 494.03h2.76v1.45h-2.76zM992.08 494.03h1.84v1.45h-1.84zM936.88 501.44h4.60v1.45h-4.60zM942.40 501.44h7.36v1.45h-7.36zM950.68 501.44h5.52v1.45h-5.52zM967.24 501.44h2.76v1.45h-2.76zM970.92 501.44h8.28v1.45h-8.28zM980.12 501.44h7.36v1.45h-7.36zM988.40 501.44h3.68v1.45h-3.68zM940.56 508.85h2.76v1.45h-2.76zM944.24 508.85h8.28v1.45h-8.28zM953.44 508.85h6.44v1.45h-6.44zM960.80 508.85h1.84v1.45h-1.84zM963.56 508.85h0.92v1.45h-0.92zM940.56 510.70h4.60v1.45h-4.60zM946.08 510.70h6.44v1.45h-6.44zM953.44 510.70h4.60v1.45h-4.60zM940.56 518.12h8.28v1.45h-8.28zM949.76 518.12h7.36v1.45h-7.36zM958.04 518.12h3.68v1.45h-3.68zM961.72 523.67h4.60v1.45h-4.60zM967.24 523.67h1.84v1.45h-1.84zM970.00 523.67h3.68v1.45h-3.68zM974.60 523.67h0.92v1.45h-0.92zM936.88 525.53h8.28v1.45h-8.28zM946.08 525.53h3.68v1.45h-3.68zM950.68 525.53h7.36v1.45h-7.36zM958.96 525.53h1.84v1.45h-1.84zM936.88 527.38h3.68v1.45h-3.68zM941.48 527.38h6.44v1.45h-6.44zM948.84 527.38h2.76v1.45h-2.76zM927.68 540.35h2.76v1.45h-2.76zM927.68 542.20h4.60v1.45h-4.60zM933.20 542.20h5.52v1.45h-5.52zM939.64 542.20h8.28v1.45h-8.28zM948.84 542.20h7.36v1.45h-7.36zM957.12 542.20h4.60v1.45h-4.60zM962.64 542.20h2.76v1.45h-2.76zM927.68 544.06h2.76v1.45h-2.76zM927.68 558.88h2.76v1.45h-2.76zM927.68 560.73h4.60v1.45h-4.60zM933.20 560.73h6.44v1.45h-6.44zM940.56 560.73h6.44v1.45h-6.44zM947.92 560.73h7.36v1.45h-7.36zM956.20 560.73h4.60v1.45h-4.60zM961.72 560.73h1.84v1.45h-1.84zM964.48 560.73h3.68v1.45h-3.68zM969.08 560.73h8.28v1.45h-8.28zM978.28 560.73h2.76v1.45h-2.76zM981.96 560.73h6.44v1.45h-6.44zM989.32 560.73h2.76v1.45h-2.76zM993.00 560.73h4.60v1.45h-4.60zM927.68 562.59h2.76v1.45h-2.76zM931.36 566.29h1.84v1.45h-1.84zM934.12 566.29h2.76v1.45h-2.76zM937.80 566.29h4.60v1.45h-4.60zM931.36 568.15h6.44v1.45h-6.44zM938.72 568.15h7.36v1.45h-7.36zM931.36 570.00h8.28v1.45h-8.28zM940.56 570.00h5.52v1.45h-5.52zM947.00 570.00h0.92v1.45h-0.92zM931.36 571.85h7.36v1.45h-7.36zM939.64 571.85h4.60v1.45h-4.60zM927.68 595.94h2.76v1.45h-2.76zM927.68 597.79h6.44v1.45h-6.44zM935.04 597.79h5.52v1.45h-5.52zM941.48 597.79h6.44v1.45h-6.44zM948.84 597.79h1.84v1.45h-1.84zM951.60 597.79h2.76v1.45h-2.76zM955.28 597.79h4.60v1.45h-4.60zM960.80 597.79h1.84v1.45h-1.84zM963.56 597.79h5.52v1.45h-5.52zM970.00 597.79h4.60v1.45h-4.60zM975.52 597.79h4.60v1.45h-4.60zM981.04 597.79h8.28v1.45h-8.28zM990.24 597.79h2.76v1.45h-2.76zM993.92 597.79h8.28v1.45h-8.28zM927.68 599.65h2.76v1.45h-2.76zM947.00 605.21h8.28v1.45h-8.28zM956.20 605.21h2.76v1.45h-2.76zM959.88 605.21h8.28v1.45h-8.28zM969.08 605.21h5.52v1.45h-5.52zM927.68 625.59h2.76v1.45h-2.76zM927.68 627.44h7.36v1.45h-7.36zM935.96 627.44h1.84v1.45h-1.84zM938.72 627.44h2.76v1.45h-2.76zM942.40 627.44h1.84v1.45h-1.84zM945.16 627.44h8.28v1.45h-8.28zM954.36 627.44h2.76v1.45h-2.76zM958.04 627.44h4.60v1.45h-4.60zM963.56 627.44h4.60v1.45h-4.60zM927.68 629.29h2.76v1.45h-2.76zM931.36 633.00h4.60v1.45h-4.60zM936.88 633.00h1.84v1.45h-1.84zM931.36 634.85h7.36v1.45h-7.36zM931.36 636.71h5.52v1.45h-5.52zM937.80 636.71h1.84v1.45h-1.84zM931.36 638.56h1.84v1.45h-1.84zM934.12 638.56h4.60v1.45h-4.60zM939.64 638.56h0.92v1.45h-0.92zM931.36 640.41h7.36v1.45h-7.36zM931.36 642.27h8.28v1.45h-8.28zM927.68 651.53h2.76v1.45h-2.76zM927.68 653.38h1.84v1.45h-1.84zM930.44 653.38h3.68v1.45h-3.68zM935.04 653.38h8.28v1.45h-8.28zM944.24 653.38h4.60v1.45h-4.60zM949.76 653.38h4.60v1.45h-4.60zM955.28 653.38h3.68v1.45h-3.68zM959.88 653.38h2.76v1.45h-2.76zM927.68 655.24h2.76v1.45h-2.76zM927.68 671.91h2.76v1.45h-2.76zM927.68 673.77h6.44v1.45h-6.44zM935.04 673.77h2.76v1.45h-2.76zM938.72 673.77h1.84v1.45h-1.84zM941.48 673.77h7.36v1.45h-7.36zM949.76 673.77h4.60v1.45h-4.60zM955.28 673.77h6.44v1.45h-6.44zM962.64 673.77h4.60v1.45h-4.60zM968.16 673.77h1.84v1.45h-1.84zM970.92 673.77h8.28v1.45h-8.28zM980.12 673.77h1.84v1.45h-1.84zM982.88 673.77h4.60v1.45h-4.60zM988.40 673.77h4.60v1.45h-4.60zM927.68 675.62h2.76v1.45h-2.76zM927.68 690.44h2.76v1.45h-2.76zM927.68 692.30h2.76v1.45h-2.76zM931.36 692.30h5.52v1.45h-5.52zM937.80 692.30h8.28v1.45h-8.28zM947.00 692.30h2.76v1.45h-2.76zM950.68 692.30h8.28v1.45h-8.28zM959.88 692.30h3.68v1.45h-3.68zM964.48 692.30h6.44v1.45h-6.44zM971.84 692.30h4.60v1.45h-4.60zM977.36 692.30h1.84v1.45h-1.84zM980.12 692.30h4.60v1.45h-4.60zM985.64 692.30h8.28v1.45h-8.28zM994.84 692.30h2.76v1.45h-2.76zM998.52 692.30h2.76v1.45h-2.76zM927.68 694.15h2.76v1.45h-2.76zM927.68 710.83h2.76v1.45h-2.76zM927.68 712.68h5.52v1.45h-5.52zM934.12 712.68h1.84v1.45h-1.84zM936.88 712.68h5.52v1.45h-5.52zM943.32 712.68h2.76v1.45h-2.76zM947.00 712.68h3.68v1.45h-3.68zM951.60 712.68h5.52v1.45h-5.52zM927.68 714.53h1.84v1.45h-1.84zM931.36 718.24h8.28v1.45h-8.28zM940.56 718.24h1.84v1.45h-1.84zM943.32 718.24h3.68v1.45h-3.68zM931.36 721.94h3.68v1.45h-3.68zM935.96 721.94h4.60v1.45h-4.60zM941.48 721.94h1.84v1.45h-1.84zM944.24 721.94h2.76v1.45h-2.76zM933.20 723.80h7.36v1.45h-7.36zM941.48 723.80h4.60v1.45h-4.60zM933.20 725.65h5.52v1.45h-5.52zM939.64 725.65h6.44v1.45h-6.44zM927.68 738.62h1.84v1.45h-1.84zM927.68 740.48h2.76v1.45h-2.76zM931.36 740.48h2.76v1.45h-2.76zM935.04 740.48h4.60v1.45h-4.60zM940.56 740.48h6.44v1.45h-6.44zM927.68 742.33h2.76v1.45h-2.76zM931.36 746.03h3.68v1.45h-3.68zM935.96 746.03h5.52v1.45h-5.52zM931.36 747.89h8.28v1.45h-8.28zM940.56 747.89h4.60v1.45h-4.60zM931.36 749.74h3.68v1.45h-3.68zM935.96 749.74h4.60v1.45h-4.60zM941.48 749.74h2.76v1.45h-2.76zM931.36 751.59h7.36v1.45h-7.36zM939.64 751.59h3.68v1.45h-3.68zM927.68 764.56h2.76v1.45h-2.76zM927.68 766.42h3.68v1.45h-3.68zM932.28 766.42h1.84v1.45h-1.84zM935.04 766.42h3.68v1.45h-3.68zM939.64 766.42h3.68v1.45h-3.68zM944.24 766.42h4.60v1.45h-4.60zM949.76 766.42h4.60v1.45h-4.60zM927.68 768.27h2.76v1.45h-2.76zM931.36 771.98h3.68v1.45h-3.68zM935.96 771.98h3.68v1.45h-3.68zM931.36 773.83h4.60v1.45h-4.60zM936.88 773.83h4.60v1.45h-4.60zM931.36 775.68h4.60v1.45h-4.60zM936.88 775.68h4.60v1.45h-4.60zM931.36 777.53h5.52v1.45h-5.52zM937.80 777.53h4.60v1.45h-4.60zM931.36 779.39h8.28v1.45h-8.28zM940.56 779.39h0.92v1.45h-0.92zM931.36 781.24h6.44v1.45h-6.44zM938.72 781.24h0.92v1.45h-0.92zM931.36 783.09h5.52v1.45h-5.52zM933.20 784.95h3.68v1.45h-3.68z"/><path fill="#b5cea8" d="M962.64 340.23h0.92v1.45h-0.92zM954.36 342.08h0.92v1.45h-0.92zM969.08 342.08h1.84v1.45h-1.84zM989.32 342.08h0.92v1.45h-0.92zM952.52 347.64h1.84v1.45h-1.84zM970.00 347.64h0.92v1.45h-0.92zM937.80 699.71h2.76v1.45h-2.76zM934.12 705.27h2.76v1.45h-2.76z"/></g></svg><div style="position:absolute;left:1013px;top:64px;width:1px;height:808px;background:#141414"></div>
<div style="position:absolute;left:1014px;top:64px;width:10px;height:2px;background:#aaa3a3"></div>
<div style="position:absolute;left:1012px;top:86px;width:1px;height:1px;background:#6fc3df"></div>
</body></html>
